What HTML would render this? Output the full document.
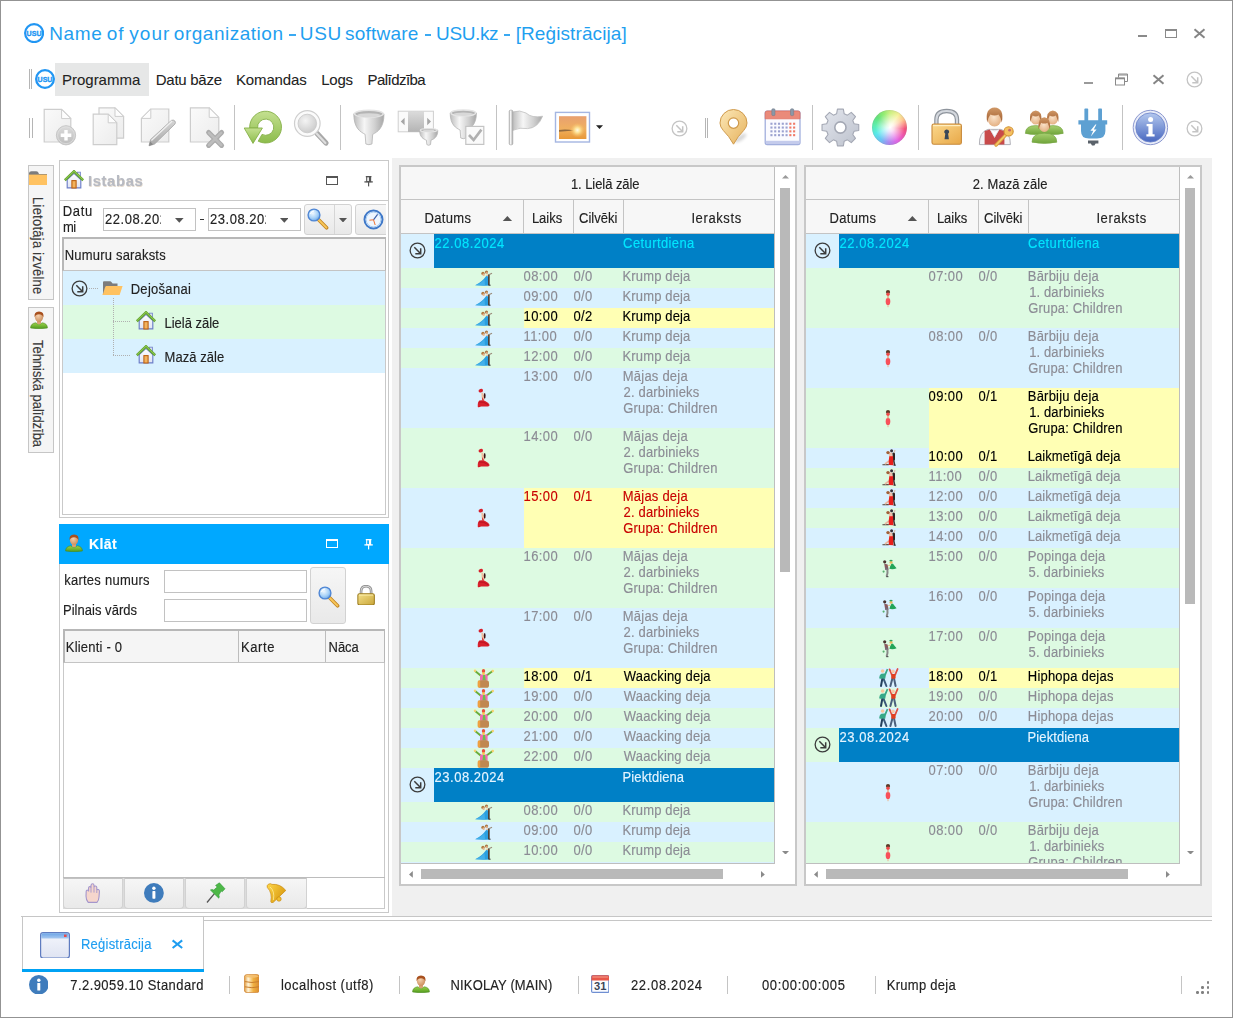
<!DOCTYPE html>
<html><head><meta charset="utf-8"><title>USU</title>
<style>
html,body{margin:0;padding:0;}
body{width:1233px;height:1018px;position:relative;overflow:hidden;background:#fff;font-family:"Liberation Sans",sans-serif;}
.r{position:absolute;display:block;}
.t{position:absolute;white-space:pre;display:block;-webkit-text-stroke:0.14px;}
.c{position:absolute;overflow:hidden;}
</style></head><body>
<div class="r" style="left:0px;top:0px;width:1233px;height:1018px;background:#fff;border:1px solid #939393;box-sizing:border-box;"></div>
<svg class="r" style="left:23.8px;top:22.5px;" width="20.2" height="20.2" viewBox="0 0 20.2 20.2"><circle cx="10.1" cy="10.1" r="9" fill="#fff" stroke="#2196f3" stroke-width="2.2"/><text x="10.1" y="12.827" font-family="Liberation Sans, sans-serif" font-weight="bold" font-size="7.474" fill="#2196f3" stroke="#2196f3" stroke-width="0.35" text-anchor="middle" textLength="14.948" lengthAdjust="spacingAndGlyphs">USU</text></svg>
<span class="t" style="left:49.20px;top:23.62px;font-size:19px;line-height:19px;color:#1f9ff0;letter-spacing:0.633px;-webkit-text-stroke:0;">Name</span>
<span class="t" style="left:106.70px;top:23.62px;font-size:19px;line-height:19px;color:#1f9ff0;letter-spacing:1.000px;-webkit-text-stroke:0;">of</span>
<span class="t" style="left:129.30px;top:23.62px;font-size:19px;line-height:19px;color:#1f9ff0;letter-spacing:1.033px;-webkit-text-stroke:0;">your</span>
<span class="t" style="left:173.80px;top:23.62px;font-size:19px;line-height:19px;color:#1f9ff0;letter-spacing:0.518px;-webkit-text-stroke:0;">organization</span>
<div class="r" style="left:289.4px;top:34.3px;width:6.2px;height:1.5px;background:#3aa9f2;"></div>
<span class="t" style="left:299.80px;top:23.62px;font-size:19px;line-height:19px;color:#1f9ff0;letter-spacing:0.650px;-webkit-text-stroke:0;">USU</span>
<span class="t" style="left:345.00px;top:23.62px;font-size:19px;line-height:19px;color:#1f9ff0;letter-spacing:0.214px;-webkit-text-stroke:0;">software</span>
<div class="r" style="left:425px;top:34.3px;width:6.1px;height:1.5px;background:#3aa9f2;"></div>
<span class="t" style="left:436.10px;top:23.62px;font-size:19px;line-height:19px;color:#1f9ff0;letter-spacing:-0.400px;-webkit-text-stroke:0;">USU.kz</span>
<div class="r" style="left:504.1px;top:34.3px;width:5.6px;height:1.5px;background:#3aa9f2;"></div>
<span class="t" style="left:515.70px;top:23.62px;font-size:19px;line-height:19px;color:#1f9ff0;letter-spacing:0.092px;-webkit-text-stroke:0;">[Reģistrācija]</span>
<div class="r" style="left:1138px;top:35px;width:9px;height:2px;background:#8a8a8a;"></div>
<div class="r" style="left:1165px;top:29px;width:12px;height:9px;border:1px solid #8a8a8a;border-top-width:2px;box-sizing:border-box;"></div>
<svg class="r" style="left:1193px;top:28px;" width="14" height="11" viewBox="0 0 14 11"><path d="M1.5 1.2 L11.5 9.8 M11.5 1.2 L1.5 9.8" stroke="#858585" stroke-width="2" fill="none"/></svg>
<div class="r" style="left:28.5px;top:69px;width:1px;height:20px;background:#b5b5b5;"></div>
<div class="r" style="left:31px;top:69px;width:1px;height:20px;background:#b5b5b5;"></div>
<svg class="r" style="left:34.9px;top:68.9px;" width="20" height="20" viewBox="0 0 20 20"><circle cx="10" cy="10" r="8.85" fill="#fff" stroke="#2196f3" stroke-width="2.3"/><text x="10" y="12.7" font-family="Liberation Sans, sans-serif" font-weight="bold" font-size="7.4" fill="#2196f3" stroke="#2196f3" stroke-width="0.35" text-anchor="middle" textLength="14.8" lengthAdjust="spacingAndGlyphs">USU</text></svg>
<div class="r" style="left:55px;top:63px;width:94px;height:33px;background:#e6e7e7;"></div>
<span class="t" style="left:62.00px;top:71.70px;font-size:15px;line-height:15px;color:#222;letter-spacing:-0.012px;-webkit-text-stroke:0.08px;">Programma</span>
<span class="t" style="left:155.80px;top:71.70px;font-size:15px;line-height:15px;color:#222;letter-spacing:-0.275px;-webkit-text-stroke:0.08px;">Datu bāze</span>
<span class="t" style="left:236.00px;top:71.70px;font-size:15px;line-height:15px;color:#222;letter-spacing:-0.143px;-webkit-text-stroke:0.08px;">Komandas</span>
<span class="t" style="left:321.20px;top:71.70px;font-size:15px;line-height:15px;color:#222;letter-spacing:-0.200px;-webkit-text-stroke:0.08px;">Logs</span>
<span class="t" style="left:367.60px;top:71.70px;font-size:15px;line-height:15px;color:#222;letter-spacing:-0.563px;-webkit-text-stroke:0.08px;">Palīdzība</span>
<div class="r" style="left:1084px;top:82px;width:9px;height:2px;background:#9a9a9a;"></div>
<svg class="r" style="left:1115px;top:73px;" width="14" height="13" viewBox="0 0 14 13"><path d="M3.5 1 H12.5 V8.5 H9.5 M3.5 1 V4.5 M3.5 2 H12.5" stroke="#8a8a8a" stroke-width="1" fill="none"/><rect x="0.5" y="5" width="9" height="7" fill="#fff" stroke="#8a8a8a"/><path d="M0.5 5.5H9.5" stroke="#8a8a8a" stroke-width="1.6"/></svg>
<svg class="r" style="left:1152px;top:74px;" width="14" height="11" viewBox="0 0 14 11"><path d="M1.5 1.2 L11.5 9.8 M11.5 1.2 L1.5 9.8" stroke="#858585" stroke-width="2" fill="none"/></svg>
<svg class="r" style="left:1185.3px;top:70px;" width="19" height="19" viewBox="0 0 19 19"><circle cx="9.5" cy="9.5" r="7.35" fill="none" stroke="#c4c4c4" stroke-width="1.3"/><path d="M6.3 6.3 L12.5 12.5 M7.3 12.7 L12.7 12.7 L12.7 7.3" fill="none" stroke="#c4c4c4" stroke-width="1.5"/></svg>
<div class="r" style="left:29px;top:117.5px;width:1px;height:20px;background:#b5b5b5;"></div>
<div class="r" style="left:31.5px;top:117.5px;width:1px;height:20px;background:#b5b5b5;"></div>
<div class="r" style="left:234px;top:105px;width:1px;height:45px;background:#c3c3c3;"></div>
<div class="r" style="left:340px;top:105px;width:1px;height:45px;background:#c3c3c3;"></div>
<div class="r" style="left:495.5px;top:105px;width:1px;height:45px;background:#c3c3c3;"></div>
<div class="r" style="left:811.8px;top:105px;width:1px;height:45px;background:#c3c3c3;"></div>
<div class="r" style="left:917.8px;top:105px;width:1px;height:45px;background:#c3c3c3;"></div>
<div class="r" style="left:1122px;top:105px;width:1px;height:45px;background:#c3c3c3;"></div>
<div class="r" style="left:704.5px;top:117.5px;width:1px;height:20px;background:#b5b5b5;"></div>
<div class="r" style="left:707px;top:117.5px;width:1px;height:20px;background:#b5b5b5;"></div>
<svg class="r" style="left:670.1px;top:118.5px;" width="19" height="19" viewBox="0 0 19 19"><circle cx="9.5" cy="9.5" r="7.35" fill="none" stroke="#c4c4c4" stroke-width="1.3"/><path d="M6.3 6.3 L12.5 12.5 M7.3 12.7 L12.7 12.7 L12.7 7.3" fill="none" stroke="#c4c4c4" stroke-width="1.5"/></svg>
<svg class="r" style="left:1185.4px;top:118.7px;" width="19" height="19" viewBox="0 0 19 19"><circle cx="9.5" cy="9.5" r="7.35" fill="none" stroke="#c4c4c4" stroke-width="1.3"/><path d="M6.3 6.3 L12.5 12.5 M7.3 12.7 L12.7 12.7 L12.7 7.3" fill="none" stroke="#c4c4c4" stroke-width="1.5"/></svg>
<svg width="0" height="0" style="position:absolute"><defs>
<linearGradient id="docg" x1="0" y1="0" x2="1" y2="1"><stop offset="0" stop-color="#fafafa"/><stop offset="1" stop-color="#ececec"/></linearGradient>
<linearGradient id="grayl" x1="0" y1="0" x2="0" y2="1"><stop offset="0" stop-color="#dcdcdc"/><stop offset="1" stop-color="#bcbcbc"/></linearGradient>
<linearGradient id="grayv" x1="0" y1="0" x2="0" y2="1"><stop offset="0" stop-color="#d6d6d6"/><stop offset="1" stop-color="#a8a8a8"/></linearGradient>
<linearGradient id="funh" x1="0" y1="0" x2="1" y2="0"><stop offset="0" stop-color="#bdbdbd"/><stop offset="0.35" stop-color="#f6f6f6"/><stop offset="0.7" stop-color="#d0d0d0"/><stop offset="1" stop-color="#a6a6a6"/></linearGradient>
<linearGradient id="grn" x1="0" y1="0" x2="0" y2="1"><stop offset="0" stop-color="#c4e090"/><stop offset="1" stop-color="#8cbc4c"/></linearGradient>
<radialGradient id="glass" cx="0.4" cy="0.35" r="0.8"><stop offset="0" stop-color="#f4f4f4"/><stop offset="1" stop-color="#c4c4c4"/></radialGradient>
<linearGradient id="gold" x1="0" y1="0" x2="1" y2="1"><stop offset="0" stop-color="#fce8b8"/><stop offset="1" stop-color="#e6b25c"/></linearGradient>
<linearGradient id="lockb" x1="0" y1="0" x2="1" y2="1"><stop offset="0" stop-color="#fbd88c"/><stop offset="1" stop-color="#e8a848"/></linearGradient>
<linearGradient id="gear" x1="0" y1="0" x2="1" y2="1"><stop offset="0" stop-color="#e4e7ee"/><stop offset="1" stop-color="#bcc1cc"/></linearGradient>
<radialGradient id="skin" cx="0.45" cy="0.4" r="0.7"><stop offset="0" stop-color="#fbe4cc"/><stop offset="1" stop-color="#e0a878"/></radialGradient>
<linearGradient id="hair" x1="0" y1="0" x2="0" y2="1"><stop offset="0" stop-color="#d09866"/><stop offset="1" stop-color="#a05c2e"/></linearGradient>
<linearGradient id="gbody" x1="0" y1="0" x2="0" y2="1"><stop offset="0" stop-color="#a8d070"/><stop offset="1" stop-color="#6fa43a"/></linearGradient>
<linearGradient id="infog" x1="0" y1="0" x2="0" y2="1"><stop offset="0" stop-color="#b4c8ee"/><stop offset="1" stop-color="#4868c0"/></linearGradient>
<linearGradient id="sun" x1="0" y1="0" x2="0" y2="1"><stop offset="0" stop-color="#e8a070"/><stop offset="0.55" stop-color="#f0b060"/><stop offset="1" stop-color="#e89838"/></linearGradient>
<radialGradient id="sung" cx="0.5" cy="0.5" r="0.5"><stop offset="0" stop-color="#fffbe8"/><stop offset="0.35" stop-color="#ffe9a0" stop-opacity="0.9"/><stop offset="1" stop-color="#f8c060" stop-opacity="0"/></radialGradient>
<filter id="blur1" x="-50%" y="-50%" width="200%" height="200%"><feGaussianBlur stdDeviation="1.6"/></filter>
</defs></svg>
<svg class="r" style="left:0;top:100px" width="1233" height="55" viewBox="0 100 1233 55"><path d="M44.2 109.4 H61.6 L70.8 118.6 V142 H44.2 Z" fill="url(#docg)" stroke="#cdcdcd" stroke-width="1.2"/><path d="M61.6 109.4 V118.6 H70.8 Z" fill="#fdfdfd" stroke="#cdcdcd" stroke-width="1"/>
<circle cx="66" cy="135.3" r="9.6" fill="url(#grayl)" stroke="#c6c6c6" stroke-width="1"/><circle cx="66" cy="135.3" r="8.4" fill="none" stroke="#e0e0e0" stroke-width="0.8"/><path d="M66 130 V140.6 M60.7 135.3 H71.3" stroke="#fff" stroke-width="3.4"/>
<path d="M99 107.8 H115 L123.6 116.4 V138.2 H99 Z" fill="url(#docg)" stroke="#cdcdcd" stroke-width="1.2"/><path d="M115 107.8 V116.4 H123.6 Z" fill="#fdfdfd" stroke="#cdcdcd" stroke-width="1"/>
<path d="M93.2 114.2 H108.2 L116.8 122.8 V144.6 H93.2 Z" fill="url(#docg)" stroke="#cdcdcd" stroke-width="1.2"/><path d="M108.2 114.2 V122.8 H116.8 Z" fill="#fdfdfd" stroke="#cdcdcd" stroke-width="1"/>
<path d="M150.8 109 H168.8 V142 H141.4 V118.4 Z" fill="url(#docg)" stroke="#cdcdcd" stroke-width="1.2"/><path d="M150.8 109 V118.4 H141.4 Z" fill="#fdfdfd" stroke="#cdcdcd" stroke-width="1"/>
<path d="M149 145.8 L150.6 139.6 L171.4 120.4 Q173.4 119.4 175 121.2 Q176 122.8 174.8 124.2 L154.6 144 Z" fill="url(#grayv)" stroke="#a2a2a2" stroke-width="0.8"/><path d="M151.4 140.4 L172.2 121" stroke="#eee" stroke-width="1.4"/><path d="M149 145.8 L150.2 141.4 L153.2 144.4Z" fill="#8a8a8a"/>
<path d="M190.4 107.8 H209.2 L218.8 117.4 V142 H190.4 Z" fill="url(#docg)" stroke="#cdcdcd" stroke-width="1.2"/><path d="M209.2 107.8 V117.4 H218.8 Z" fill="#fdfdfd" stroke="#cdcdcd" stroke-width="1"/>
<path d="M208.6 132.4 L221.6 145.4 M221.6 132.4 L208.6 145.4" stroke="#ababab" stroke-width="5" stroke-linecap="round"/><path d="M209 132.8 L221.2 145 M221.2 132.8 L209 145" stroke="#bdbdbd" stroke-width="2.6" stroke-linecap="round"/>
<path d="M257 138.4 A 11.9 11.9 0 1 0 253.6 127 L253.6 128.4 M257 138.4" fill="none"/>
<path d="M249.7 128 A 15.9 15.9 0 1 1 258.2 141.2 L262 134.4 A 8.1 8.1 0 1 0 257.6 128 Z" fill="url(#grn)" stroke="#86b048" stroke-width="0.9"/>
<path d="M244.2 128 H262.4 L253 143.4 Z" fill="url(#grn)" stroke="#86b048" stroke-width="0.9"/>
<path d="M317 133.4 L326 143" stroke="#a8a8a8" stroke-width="5.2" stroke-linecap="round"/><path d="M316.6 133.6 L325.4 143" stroke="#dedede" stroke-width="2.2" stroke-linecap="round"/>
<circle cx="307.3" cy="123.5" r="12.8" fill="#fbfbfb" stroke="#cfcfcf" stroke-width="1.2"/><circle cx="307.3" cy="123.5" r="9.3" fill="url(#glass)" stroke="#c6c6c6" stroke-width="0.8"/>
<path d="M353.8 113.802 C353.8 128.557 360.54 131.877 365.1 134.334 L365.86 144 Q368.9 145.4 371.94 144 L372.7 134.334 C377.26 131.877 384 128.557 384 113.802 Z" fill="url(#funh)" stroke="#b4b4b4" stroke-width="0.8"/><ellipse cx="368.9" cy="113.802" rx="14.4" ry="3.602" fill="#b4b4b4" stroke="#e4e4e4" stroke-width="1.4"/><ellipse cx="368.9" cy="115.203" rx="11.7" ry="2.001" fill="#d8d8d8"/>
<rect x="398.2" y="111.2" width="35.2" height="20.6" fill="#fafafa" stroke="#cfcfcf" stroke-width="1"/><rect x="408" y="111.2" width="16" height="20.6" fill="url(#grayv)" opacity="0.85"/><path d="M404.6 117.8 V125.2 L400.8 121.5Z M427.2 117.8 V125.2 L431 121.5Z" fill="#a6a6a6"/>
<path d="M419.6 130.155 C419.6 137.363 423.64 138.985 426.4 140.185 L426.86 144.6 Q428.7 146 430.54 144.6 L431 140.185 C433.76 138.985 437.8 137.363 437.8 130.155 Z" fill="url(#funh)" stroke="#b4b4b4" stroke-width="0.8"/><ellipse cx="428.7" cy="130.155" rx="8.4" ry="1.555" fill="#b4b4b4" stroke="#e4e4e4" stroke-width="1.4"/><ellipse cx="428.7" cy="130.839" rx="5.7" ry="0.9775" fill="#d8d8d8"/>
<path d="M450.2 112.935 C450.2 125.231 456.26 127.998 460.1 130.045 L460.74 138 Q463.3 139.4 465.86 138 L466.5 130.045 C470.34 127.998 476.4 125.231 476.4 112.935 Z" fill="url(#funh)" stroke="#b4b4b4" stroke-width="0.8"/><ellipse cx="463.3" cy="112.935" rx="12.4" ry="2.935" fill="#b4b4b4" stroke="#e4e4e4" stroke-width="1.4"/><ellipse cx="463.3" cy="114.102" rx="9.7" ry="1.6675" fill="#d8d8d8"/>
<rect x="465.8" y="126.4" width="18" height="18" fill="#fafafa" stroke="#c4c4c4" stroke-width="1.2"/><path d="M469 135 L473.6 140 L481.4 129.6" fill="none" stroke="#b0b0b0" stroke-width="2.6"/>
<path d="M512.6 112 Q520 109.6 526 113 Q532 118.4 542.6 116.2 Q538 128 527.6 128.6 Q520 127 512.6 130.4Z" fill="url(#funh)" stroke="#c0c0c0" stroke-width="0.8"/>
<rect x="509.2" y="110.2" width="3.6" height="34.6" rx="1.2" fill="url(#funh)" stroke="#a8a8a8" stroke-width="0.7"/>
<rect x="555.5" y="112.4" width="34" height="29.6" fill="#fff" stroke="#a4b6e2" stroke-width="1.4"/><rect x="559" y="116.2" width="27.4" height="22.8" fill="url(#sun)"/><path d="M559 130 Q566 128.6 574 130.6 L559 131.8Z" fill="#7a5a3a" opacity="0.8"/><circle cx="577.4" cy="130.2" r="7.4" fill="url(#sung)"/>
<path d="M596 125.2 H603 L599.5 128.9Z" fill="#222"/>
<ellipse cx="740.5" cy="138" rx="7" ry="2.6" fill="#000" opacity="0.16" transform="rotate(-35 740.5 138)" filter="url(#blur1)"/>
<path d="M733.5 144.2 Q729 136 723.4 130.6 Q720 127 720 123 A13.5 13.5 0 0 1 747 123 Q747 127 743.6 130.6 Q738 136 733.5 144.2Z" fill="url(#gold)" stroke="#cf9a4c" stroke-width="1"/><circle cx="733.5" cy="123.1" r="5.2" fill="#fff" stroke="#cf9a4c" stroke-width="1.2"/>
<rect x="765.2" y="111" width="34.8" height="33.6" rx="2" fill="#fbfbff" stroke="#9aa8da" stroke-width="1.2"/><path d="M765.2 118.8 V113 Q765.2 111 767.2 111 H798 Q800 111 800 113 V118.8Z" fill="#ea8a7a" stroke="#e07060" stroke-width="0.8"/><rect x="765.8" y="140.8" width="33.6" height="3.4" fill="#c4cbec"/>
<rect x="771.8" y="108.8" width="3.2" height="6.8" rx="1" fill="#8a98a8" stroke="#6c7888" stroke-width="0.5"/><rect x="790.5" y="108.8" width="3.2" height="6.8" rx="1" fill="#8a98a8" stroke="#6c7888" stroke-width="0.5"/>
<rect x="770.4" y="122.7" width="2.1" height="2.1" fill="#9ca2d0"/>
<rect x="774.18" y="122.7" width="2.1" height="2.1" fill="#9ca2d0"/>
<rect x="777.96" y="122.7" width="2.1" height="2.1" fill="#9ca2d0"/>
<rect x="781.74" y="122.7" width="2.1" height="2.1" fill="#9ca2d0"/>
<rect x="785.52" y="122.7" width="2.1" height="2.1" fill="#9ca2d0"/>
<rect x="789.3" y="122.7" width="2.1" height="2.1" fill="#f07a68"/>
<rect x="793.08" y="122.7" width="2.1" height="2.1" fill="#f07a68"/>
<rect x="770.4" y="126.5" width="2.1" height="2.1" fill="#9ca2d0"/>
<rect x="774.18" y="126.5" width="2.1" height="2.1" fill="#9ca2d0"/>
<rect x="777.96" y="126.5" width="2.1" height="2.1" fill="#9ca2d0"/>
<rect x="781.74" y="126.5" width="2.1" height="2.1" fill="#9ca2d0"/>
<rect x="785.52" y="126.5" width="2.1" height="2.1" fill="#9ca2d0"/>
<rect x="789.3" y="126.5" width="2.1" height="2.1" fill="#f07a68"/>
<rect x="793.08" y="126.5" width="2.1" height="2.1" fill="#f07a68"/>
<rect x="770.4" y="130.3" width="2.1" height="2.1" fill="#9ca2d0"/>
<rect x="774.18" y="130.3" width="2.1" height="2.1" fill="#9ca2d0"/>
<rect x="777.96" y="130.3" width="2.1" height="2.1" fill="#9ca2d0"/>
<rect x="781.74" y="130.3" width="2.1" height="2.1" fill="#9ca2d0"/>
<rect x="785.52" y="130.3" width="2.1" height="2.1" fill="#9ca2d0"/>
<rect x="789.3" y="130.3" width="2.1" height="2.1" fill="#f07a68"/>
<rect x="793.08" y="130.3" width="2.1" height="2.1" fill="#f07a68"/>
<rect x="770.4" y="134.1" width="2.1" height="2.1" fill="#9ca2d0"/>
<rect x="774.18" y="134.1" width="2.1" height="2.1" fill="#9ca2d0"/>
<rect x="777.96" y="134.1" width="2.1" height="2.1" fill="#9ca2d0"/>
<rect x="781.74" y="134.1" width="2.1" height="2.1" fill="#9ca2d0"/>
<rect x="785.52" y="134.1" width="2.1" height="2.1" fill="#9ca2d0"/>
<rect x="789.3" y="134.1" width="2.1" height="2.1" fill="#f07a68"/>
<rect x="793.08" y="134.1" width="2.1" height="2.1" fill="#f07a68"/>
<path d="M836.61 113.81 L837.44 109.14 L843.36 109.14 L844.19 113.81 L847.40 115.14 L851.29 112.42 L855.48 116.61 L852.76 120.50 L854.09 123.71 L858.76 124.54 L858.76 130.46 L854.09 131.29 L852.76 134.50 L855.48 138.39 L851.29 142.58 L847.40 139.86 L844.19 141.19 L843.36 145.86 L837.44 145.86 L836.61 141.19 L833.40 139.86 L829.51 142.58 L825.32 138.39 L828.04 134.50 L826.71 131.29 L822.04 130.46 L822.04 124.54 L826.71 123.71 L828.04 120.50 L825.32 116.61 L829.51 112.42 L833.40 115.14 Z" fill="url(#gear)" stroke="#a4a8b4" stroke-width="1.1" stroke-linejoin="round"/>
<circle cx="840.4" cy="127.5" r="5.6" fill="#fff" stroke="#a4a8b4" stroke-width="1.6"/>
<path d="M936.4 125 V119.8 Q936.4 111 946.7 111 Q957 111 957 119.8 V125" fill="none" stroke="#8e949c" stroke-width="4.4"/><path d="M936.4 125 V119.8 Q936.4 111 946.7 111 Q957 111 957 119.8 V125" fill="none" stroke="#d4d8de" stroke-width="2"/>
<rect x="932" y="124" width="29.4" height="20.2" rx="1.8" fill="url(#lockb)" stroke="#c88a3c" stroke-width="1.1"/><path d="M933 125.6 H960.4" stroke="#ffeec0" stroke-width="1.2"/><path d="M946.7 129.4 a2.4 2.4 0 0 1 1.4 4.4 l0.8 5.4 h-4.4 l0.8 -5.4 a2.4 2.4 0 0 1 1.4 -4.4z" fill="#3a4858"/>
<path d="M979.4 144.6 Q979 132 988 129.4 L1001 129.4 Q1010.6 132 1010.4 144.6Z" fill="#f4f4f6" stroke="#a8a8b0" stroke-width="0.9"/><path d="M984.6 144.6 V131 L990 129.4 L994.6 138 L999.2 129.4 L1004.4 131 V144.6Z" fill="#c84a4a"/><path d="M990 129.4 L994.6 137 L999.2 129.4 L994.6 131Z" fill="#fff" stroke="#c8c8d0" stroke-width="0.5"/>
<ellipse cx="994.5" cy="118.6" rx="6.8" ry="8" fill="url(#skin)"/><path d="M987.2 122.6 Q984.6 108 994.6 107.4 Q1004.6 108 1001.8 122.6 Q1000.6 117 998.6 114.6 Q994.6 116.4 990.4 114.6 Q988.4 117 987.2 122.6Z" fill="url(#hair)"/>
<path d="M996 145 L1006 134.6" stroke="#d89a3a" stroke-width="3.4" stroke-linecap="round"/><path d="M996 145 L1006 134.6" stroke="#f6c868" stroke-width="1.6" stroke-linecap="round"/><circle cx="1008.6" cy="131.4" r="4.6" fill="#f4c060" stroke="#d09030" stroke-width="1.1"/><circle cx="1009.6" cy="130.2" r="1.4" fill="#c86a6a"/>
<path d="M1025.4 133.4 Q1025.4 125.6 1035.7 125.6 Q1046 125.6 1046 133.4 Q1035.7 135.8 1025.4 133.4 Z" fill="url(#gbody)" stroke="#7aa848" stroke-width="0.7"/><ellipse cx="1035.7" cy="118.2" rx="5.248" ry="6.4" fill="url(#skin)"/><path d="M1030.2 122.04 Q1028.65 110.84 1035.7 110.392 Q1042.75 110.84 1041.2 122.04 Q1039.99 117.88 1038.78 115.512 Q1035.7 117.432 1032.62 115.512 Q1031.41 117.88 1030.2 122.04Z" fill="url(#hair)"/>
<path d="M1042.6 133.4 Q1042.6 125.6 1052.9 125.6 Q1063.2 125.6 1063.2 133.4 Q1052.9 135.8 1042.6 133.4 Z" fill="url(#gbody)" stroke="#7aa848" stroke-width="0.7"/><ellipse cx="1052.8" cy="118.2" rx="5.248" ry="6.4" fill="url(#skin)"/><path d="M1047.3 122.04 Q1045.75 110.84 1052.8 110.392 Q1059.85 110.84 1058.3 122.04 Q1057.09 117.88 1055.88 115.512 Q1052.8 117.432 1049.72 115.512 Q1048.51 117.88 1047.3 122.04Z" fill="url(#hair)"/>
<path d="M1032 142.2 Q1032 133.2 1044.4 133.2 Q1056.8 133.2 1056.8 142.2 Q1044.4 144.6 1032 142.2 Z" fill="url(#gbody)" stroke="#7aa848" stroke-width="0.7"/><ellipse cx="1044.3" cy="125.4" rx="5.412" ry="6.6" fill="url(#skin)"/><path d="M1038.62 129.36 Q1037.03 117.81 1044.3 117.348 Q1051.57 117.81 1049.98 129.36 Q1048.73 125.07 1047.48 122.628 Q1044.3 124.608 1041.12 122.628 Q1039.87 125.07 1038.62 129.36Z" fill="url(#hair)"/>
<rect x="1084.4" y="108.6" width="3.8" height="13" rx="0.8" fill="#5da0d2"/><rect x="1098.2" y="108.6" width="3.8" height="13" rx="0.8" fill="#5da0d2"/>
<path d="M1078.4 120.2 H1107.2 V124.6 H1105.4 V131 Q1105.4 138.6 1097 138.6 H1089 Q1081 138.6 1081 131 V124.6 H1078.4Z" fill="#5da0d2"/><path d="M1095.4 124.6 L1090.4 130.8 H1093.2 L1090.8 136.4 L1096.6 129.6 H1093.8 L1096.4 124.6Z" fill="#fff"/>
<path d="M1088 140.4 H1098.4 V143.4 H1095.6 L1094.4 145.6 H1092 L1090.8 143.4 H1088Z" fill="#5a626a"/>
<circle cx="1150.4" cy="127.5" r="17.2" fill="#e8ecf8" stroke="#8c98d0" stroke-width="1"/><circle cx="1150.4" cy="127.5" r="14.6" fill="url(#infog)" stroke="#6a80c8" stroke-width="0.8"/>
<circle cx="1150.6" cy="119.6" r="2.5" fill="#fff"/><path d="M1146.6 124 H1152.6 V134.2 H1154.6 V136.4 H1146.4 V134.2 H1148.4 V126.2 H1146.6Z" fill="#fff"/></svg>
<div class="r" style="left:871.6px;top:109.7px;width:35px;height:35px;border-radius:50%;background:radial-gradient(circle at 52% 50%,rgba(255,255,255,1) 0%,rgba(255,255,255,0.8) 16%,rgba(255,255,255,0) 58%),conic-gradient(from 0deg,#c8f080 0deg,#f6f29a 35deg,#ffc890 60deg,#f4507c 95deg,#ee58b8 125deg,#e266e6 150deg,#a88af0 185deg,#6cc4f6 215deg,#58eaea 245deg,#5cf0b4 275deg,#66e47c 310deg,#98ee72 340deg,#c8f080 360deg);box-shadow:inset 0 0 2px rgba(120,120,120,0.5);"></div>
<div class="r" style="left:391.5px;top:157.5px;width:820.5px;height:758.5px;background:#f0f0f0;"></div>
<div class="r" style="left:21px;top:915.5px;width:1191px;height:1px;background:#c6c6c6;"></div>
<div class="r" style="left:204px;top:919.5px;width:1008px;height:1px;background:#c6c6c6;"></div>
<div class="r" style="left:28px;top:164.5px;width:26px;height:135px;background:#f5f5f5;border:1px solid #c6c6c6;box-sizing:border-box;"></div>
<svg class="r" style="left:28.5px;top:171px;" width="18" height="14" viewBox="0 0 18 14"><path d="M0 2.2 Q0 0.2 2.5 0.2 H7 Q8.6 0.2 9.3 1.5 L10 3 H18 V6 H0 Z" fill="#7c7c7c"/>
<rect x="0" y="3.6" width="18" height="10.4" fill="#ffc261"/></svg>
<span class="t" style="left:44.70px;top:196.70px;font-size:13px;line-height:13px;color:#3a3a3a;letter-spacing:0.256px;transform-origin:0 0;transform:rotate(90deg) scaleY(1.1);">Lietotāja izvēlne</span>
<div class="r" style="left:28px;top:306.5px;width:26px;height:146px;background:#f5f5f5;border:1px solid #c6c6c6;box-sizing:border-box;"></div>
<svg class="r" style="left:30px;top:310.6px;" width="18" height="18" viewBox="0 0 18 18"><defs><radialGradient id="uh520" cx="0.4" cy="0.35" r="0.7"><stop offset="0" stop-color="#f6d2b0"/><stop offset="1" stop-color="#c98a58"/></radialGradient>
<linearGradient id="ub520" x1="0" y1="0" x2="0" y2="1"><stop offset="0" stop-color="#9bd24a"/><stop offset="1" stop-color="#4f9a1e"/></linearGradient></defs>
<path d="M0.6 17 Q0.6 12.6 5.5 11.8 L9 13.4 L12.5 11.8 Q17.4 12.6 17.4 17 Q9 18.6 0.6 17Z" fill="url(#ub520)" stroke="#4a8a1c" stroke-width="0.6"/>
<path d="M7 9 H11 V12.4 L9 13.6 L7 12.4Z" fill="#d9a273"/>
<ellipse cx="9" cy="6" rx="4.1" ry="5" fill="url(#uh520)"/>
<path d="M4.6 6.2 Q3.8 0.6 9 0.4 Q14.4 0.6 13.4 6.4 Q12.6 3.4 9 3.2 Q5.6 3.4 4.6 6.2Z" fill="#a8501e"/></svg>
<span class="t" style="left:44.70px;top:339.80px;font-size:13px;line-height:13px;color:#3a3a3a;letter-spacing:-0.035px;transform-origin:0 0;transform:rotate(90deg) scaleY(1.1);">Tehniskā palīdzība</span>
<div class="r" style="left:59px;top:160px;width:330px;height:358px;background:#fff;border:1px solid #c9c9c9;box-sizing:border-box;"></div>
<div class="r" style="left:60px;top:200px;width:328px;height:1px;background:#c9c9c9;"></div>
<svg class="r" style="left:63.8px;top:170px;" width="20" height="19" viewBox="0 0 20 19"><defs><linearGradient id="hg808" x1="0" y1="0" x2="0" y2="1"><stop offset="0" stop-color="#fff"/><stop offset="1" stop-color="#dfe4f3"/></linearGradient></defs>
<rect x="13.4" y="2.2" width="3" height="6" fill="#dfe3f4" stroke="#7687cc" stroke-width="0.9"/>
<path d="M3.2 9.5 L10 3.4 L16.8 9.5 V17.8 H3.2 Z" fill="url(#hg808)" stroke="#6c7ec8" stroke-width="1.15"/>
<path d="M0.8 10.2 L10 1.4 L19.2 10.2" fill="none" stroke="#5f9e2c" stroke-width="2.6" stroke-linejoin="miter"/>
<path d="M1.2 9.6 L10 1.2 L18.8 9.6" fill="none" stroke="#8cc850" stroke-width="1.1"/>
<rect x="7.9" y="10.6" width="4.2" height="7.4" fill="#f2b25c" stroke="#bc6214" stroke-width="1.1"/></svg>
<span class="t" style="left:88.40px;top:175.20px;font-size:13px;line-height:13px;color:#b7bac2;letter-spacing:0.557px;font-weight:bold;transform-origin:0.80px 11.00px;transform:scale(1.14,1.06);text-shadow:0.5px 0.6px 0 #e6dccf;">Istabas</span>
<div class="r" style="left:326px;top:176px;width:12px;height:9px;border:1px solid #555;border-top-width:2.5px;box-sizing:border-box;"></div>
<svg class="r" style="left:363.6px;top:176.2px;" width="9.2" height="10.6" viewBox="0 0 9.2 10.6"><path d="M1.8 0.6 H7.4" stroke="#555" stroke-width="1.2"/><rect x="2.7" y="0.6" width="3.9" height="5" fill="none" stroke="#555" stroke-width="1.1"/><rect x="4.9" y="0.6" width="1.8" height="5" fill="#555"/><path d="M0.4 5.9 H8.8" stroke="#555" stroke-width="1.3"/><path d="M4.6 6 V10.4" stroke="#555" stroke-width="1.2"/></svg>
<span class="t" style="left:62.70px;top:205.00px;font-size:13px;line-height:13px;color:#222;letter-spacing:0.700px;transform-origin:0 11.00px;transform:scaleY(1.1);">Datu</span>
<span class="t" style="left:63.10px;top:221.40px;font-size:13px;line-height:13px;color:#222;letter-spacing:-0.600px;transform-origin:0 11.00px;transform:scaleY(1.1);">mi</span>
<div class="r" style="left:102.5px;top:207.5px;width:93.5px;height:23.5px;background:#fff;border:1px solid #c2c2c2;box-sizing:border-box;"></div>
<div class="c" style="left:103.5px;top:209px;width:57.8px;height:20px;"><span class="t" style="left:1.60px;top:4.00px;font-size:13px;line-height:13px;color:#222;letter-spacing:0.522px;transform-origin:0 11.00px;transform:scaleY(1.1);">22.08.2024</span></div>
<svg class="r" style="left:175px;top:217.8px;" width="8.6" height="4.8" viewBox="0 0 8.6 4.8"><path d="M0 0 H8.6 L4.3 4.8 Z" fill="#555"/></svg>
<div class="r" style="left:207.5px;top:207.5px;width:93.5px;height:23.5px;background:#fff;border:1px solid #c2c2c2;box-sizing:border-box;"></div>
<div class="c" style="left:208.5px;top:209px;width:57.8px;height:20px;"><span class="t" style="left:1.60px;top:4.00px;font-size:13px;line-height:13px;color:#222;letter-spacing:0.522px;transform-origin:0 11.00px;transform:scaleY(1.1);">23.08.2024</span></div>
<svg class="r" style="left:279.8px;top:217.8px;" width="8.6" height="4.8" viewBox="0 0 8.6 4.8"><path d="M0 0 H8.6 L4.3 4.8 Z" fill="#555"/></svg>
<div class="r" style="left:200.3px;top:218.9px;width:4.2px;height:1.2px;background:#333;"></div>
<div class="r" style="left:304px;top:204px;width:48px;height:31px;background:linear-gradient(#f6f6f6,#e9e9e9);border:1px solid #d2d2d2;border-radius:3px;box-sizing:border-box;"></div>
<div class="r" style="left:333.5px;top:205px;width:1px;height:29px;background:#d6d6d6;"></div>
<svg class="r" style="left:306.9px;top:207.8px;" width="22" height="22" viewBox="0 0 22 22"><defs><radialGradient id="mg930" cx="0.4" cy="0.35" r="0.75"><stop offset="0" stop-color="#f0f8ff"/><stop offset="0.55" stop-color="#a8d2f8"/><stop offset="1" stop-color="#5a9ae4"/></radialGradient></defs>
<path d="M11.4 11.6 L19.6 19.8" stroke="#c08424" stroke-width="3.6" stroke-linecap="round"/>
<path d="M11.6 11.8 L19.4 19.6" stroke="#f8c658" stroke-width="2" stroke-linecap="round"/>
<circle cx="7" cy="7" r="5.9" fill="url(#mg930)" stroke="#4f86d4" stroke-width="1.4"/>
<path d="M3.4 6 Q4.2 3.4 7 3" stroke="#fff" stroke-width="1.1" fill="none" opacity="0.9"/></svg>
<svg class="r" style="left:338.8px;top:217.6px;" width="8" height="4.5" viewBox="0 0 8 4.5"><path d="M0 0 H8 L4 4.5 Z" fill="#555"/></svg>
<div class="c" style="left:355px;top:204px;width:31px;height:31px;"><div class="r" style="left:0px;top:0px;width:40px;height:31px;background:linear-gradient(#f6f6f6,#e9e9e9);border:1px solid #d2d2d2;border-radius:3px;box-sizing:border-box;"></div><svg class="r" style="left:7.5px;top:5px;" width="21" height="21" viewBox="0 0 21 21"><circle cx="10.5" cy="10.5" r="9" fill="#eef6ff" stroke="#3f78c8" stroke-width="2"/><circle cx="10.5" cy="10.5" r="7.4" fill="none" stroke="#9cc4ee" stroke-width="0.8"/><path d="M10.5 10.8 L14.6 5.4" stroke="#3b5fa8" stroke-width="1.2"/><path d="M10.5 10.8 L12.2 16" stroke="#f07030" stroke-width="1"/><path d="M10.5 10.8 L6.4 11.2" stroke="#f07030" stroke-width="1"/></svg></div>
<div class="r" style="left:62px;top:236.5px;width:324px;height:278.5px;background:#fff;border:1px solid #c9c9c9;box-sizing:border-box;"></div>
<div class="r" style="left:62px;top:236.5px;width:324px;height:34px;background:#f5f5f5;border-top:2px solid #b7b7b7;border-left:2px solid #b7b7b7;border-right:1.5px solid #b7b7b7;border-bottom:1px solid #c4c4c4;box-sizing:border-box;"></div>
<span class="t" style="left:64.80px;top:249.00px;font-size:13px;line-height:13px;color:#222;letter-spacing:0.186px;transform-origin:0 11.00px;transform:scaleY(1.1);">Numuru saraksts</span>
<div class="r" style="left:63px;top:271px;width:322px;height:34px;background:#d9f1ff;"></div>
<div class="r" style="left:63px;top:305px;width:322px;height:34.2px;background:#ddfae2;"></div>
<div class="r" style="left:63px;top:339.2px;width:322px;height:33.6px;background:#d9f1ff;"></div>
<svg class="r" style="left:69.8px;top:278.5px;" width="19" height="19" viewBox="0 0 19 19"><circle cx="9.5" cy="9.5" r="7.35" fill="none" stroke="#3c3c3c" stroke-width="1.3"/><path d="M6.3 6.3 L12.5 12.5 M7.3 12.7 L12.7 12.7 L12.7 7.3" fill="none" stroke="#3c3c3c" stroke-width="1.5"/></svg>
<div class="r" style="left:89px;top:288px;width:9px;height:1px;border-top:1px dotted #b0b0b0;"></div>
<svg class="r" style="left:102px;top:280.8px;" width="21" height="14.5" viewBox="0 0 21 14.5"><path d="M1 1.2 Q1 0.3 2 0.3 H8 Q9 0.3 9.6 1.2 L10.6 2.6 H15.5 V6 H1 Z" fill="#7c7c7c"/>
<path d="M0.4 14 L3.2 5 H20.6 L17.6 14 Z" fill="#ffc261"/>
<path d="M1 1.4 V13 L3.4 5.2" fill="#7c7c7c"/></svg>
<span class="t" style="left:130.70px;top:283.00px;font-size:13px;line-height:13px;color:#222;letter-spacing:0.288px;transform-origin:0 11.00px;transform:scaleY(1.1);">Dejošanai</span>
<div class="r" style="left:113px;top:298px;width:1px;height:57px;border-left:1px dotted #b0b0b0;"></div>
<div class="r" style="left:113px;top:321px;width:17px;height:1px;border-top:1px dotted #b0b0b0;"></div>
<div class="r" style="left:113px;top:354.5px;width:17px;height:1px;border-top:1px dotted #b0b0b0;"></div>
<svg class="r" style="left:136.2px;top:311px;" width="20" height="19" viewBox="0 0 20 19"><defs><linearGradient id="hg1673" x1="0" y1="0" x2="0" y2="1"><stop offset="0" stop-color="#fff"/><stop offset="1" stop-color="#dfe4f3"/></linearGradient></defs>
<rect x="13.4" y="2.2" width="3" height="6" fill="#dfe3f4" stroke="#7687cc" stroke-width="0.9"/>
<path d="M3.2 9.5 L10 3.4 L16.8 9.5 V17.8 H3.2 Z" fill="url(#hg1673)" stroke="#6c7ec8" stroke-width="1.15"/>
<path d="M0.8 10.2 L10 1.4 L19.2 10.2" fill="none" stroke="#5f9e2c" stroke-width="2.6" stroke-linejoin="miter"/>
<path d="M1.2 9.6 L10 1.2 L18.8 9.6" fill="none" stroke="#8cc850" stroke-width="1.1"/>
<rect x="7.9" y="10.6" width="4.2" height="7.4" fill="#f2b25c" stroke="#bc6214" stroke-width="1.1"/></svg>
<svg class="r" style="left:136.2px;top:344.8px;" width="20" height="19" viewBox="0 0 20 19"><defs><linearGradient id="hg1706" x1="0" y1="0" x2="0" y2="1"><stop offset="0" stop-color="#fff"/><stop offset="1" stop-color="#dfe4f3"/></linearGradient></defs>
<rect x="13.4" y="2.2" width="3" height="6" fill="#dfe3f4" stroke="#7687cc" stroke-width="0.9"/>
<path d="M3.2 9.5 L10 3.4 L16.8 9.5 V17.8 H3.2 Z" fill="url(#hg1706)" stroke="#6c7ec8" stroke-width="1.15"/>
<path d="M0.8 10.2 L10 1.4 L19.2 10.2" fill="none" stroke="#5f9e2c" stroke-width="2.6" stroke-linejoin="miter"/>
<path d="M1.2 9.6 L10 1.2 L18.8 9.6" fill="none" stroke="#8cc850" stroke-width="1.1"/>
<rect x="7.9" y="10.6" width="4.2" height="7.4" fill="#f2b25c" stroke="#bc6214" stroke-width="1.1"/></svg>
<span class="t" style="left:164.50px;top:317.00px;font-size:13px;line-height:13px;color:#222;letter-spacing:-0.011px;transform-origin:0 11.00px;transform:scaleY(1.1);">Lielā zāle</span>
<span class="t" style="left:164.50px;top:351.00px;font-size:13px;line-height:13px;color:#222;letter-spacing:0.062px;transform-origin:0 11.00px;transform:scaleY(1.1);">Mazā zāle</span>
<div class="r" style="left:59px;top:524px;width:330px;height:389px;background:#fff;border:1px solid #c9c9c9;box-sizing:border-box;"></div>
<div class="r" style="left:59px;top:524px;width:330px;height:40px;background:#00a8ff;"></div>
<svg class="r" style="left:64.7px;top:533.6px;" width="18" height="18" viewBox="0 0 18 18"><defs><radialGradient id="uh986" cx="0.4" cy="0.35" r="0.7"><stop offset="0" stop-color="#f6d2b0"/><stop offset="1" stop-color="#c98a58"/></radialGradient>
<linearGradient id="ub986" x1="0" y1="0" x2="0" y2="1"><stop offset="0" stop-color="#9bd24a"/><stop offset="1" stop-color="#4f9a1e"/></linearGradient></defs>
<path d="M0.6 17 Q0.6 12.6 5.5 11.8 L9 13.4 L12.5 11.8 Q17.4 12.6 17.4 17 Q9 18.6 0.6 17Z" fill="url(#ub986)" stroke="#4a8a1c" stroke-width="0.6"/>
<path d="M7 9 H11 V12.4 L9 13.6 L7 12.4Z" fill="#d9a273"/>
<ellipse cx="9" cy="6" rx="4.1" ry="5" fill="url(#uh986)"/>
<path d="M4.6 6.2 Q3.8 0.6 9 0.4 Q14.4 0.6 13.4 6.4 Q12.6 3.4 9 3.2 Q5.6 3.4 4.6 6.2Z" fill="#a8501e"/></svg>
<span class="t" style="left:88.80px;top:538.20px;font-size:13px;line-height:13px;color:#fff;letter-spacing:0.405px;font-weight:bold;transform-origin:0.80px 11.00px;transform:scale(1.08,1.06);">Klāt</span>
<div class="r" style="left:326px;top:539.2px;width:12px;height:9px;border:1px solid #fff;border-top-width:2.5px;box-sizing:border-box;"></div>
<svg class="r" style="left:363.6px;top:539.2px;" width="9.2" height="10.6" viewBox="0 0 9.2 10.6"><path d="M1.8 0.6 H7.4" stroke="#fff" stroke-width="1.2"/><rect x="2.7" y="0.6" width="3.9" height="5" fill="none" stroke="#fff" stroke-width="1.1"/><rect x="4.9" y="0.6" width="1.8" height="5" fill="#fff"/><path d="M0.4 5.9 H8.8" stroke="#fff" stroke-width="1.3"/><path d="M4.6 6 V10.4" stroke="#fff" stroke-width="1.2"/></svg>
<span class="t" style="left:64.20px;top:574.00px;font-size:13px;line-height:13px;color:#222;letter-spacing:0.250px;transform-origin:0 11.00px;transform:scaleY(1.1);">kartes numurs</span>
<span class="t" style="left:63.00px;top:604.00px;font-size:13px;line-height:13px;color:#222;letter-spacing:0.025px;transform-origin:0 11.00px;transform:scaleY(1.1);">Pilnais vārds</span>
<div class="r" style="left:163.5px;top:569.5px;width:143px;height:23px;background:#fff;border:1px solid #c2c2c2;box-sizing:border-box;"></div>
<div class="r" style="left:163.5px;top:599.3px;width:143px;height:23px;background:#fff;border:1px solid #c2c2c2;box-sizing:border-box;"></div>
<div class="r" style="left:310px;top:567px;width:35.5px;height:56.5px;background:linear-gradient(#f6f6f6,#e9e9e9);border:1px solid #d2d2d2;border-radius:3px;box-sizing:border-box;"></div>
<svg class="r" style="left:317.9px;top:585.9px;" width="22" height="22" viewBox="0 0 22 22"><defs><radialGradient id="mg2075" cx="0.4" cy="0.35" r="0.75"><stop offset="0" stop-color="#f0f8ff"/><stop offset="0.55" stop-color="#a8d2f8"/><stop offset="1" stop-color="#5a9ae4"/></radialGradient></defs>
<path d="M11.4 11.6 L19.6 19.8" stroke="#c08424" stroke-width="3.6" stroke-linecap="round"/>
<path d="M11.6 11.8 L19.4 19.6" stroke="#f8c658" stroke-width="2" stroke-linecap="round"/>
<circle cx="7" cy="7" r="5.9" fill="url(#mg2075)" stroke="#4f86d4" stroke-width="1.4"/>
<path d="M3.4 6 Q4.2 3.4 7 3" stroke="#fff" stroke-width="1.1" fill="none" opacity="0.9"/></svg>
<svg class="r" style="left:357.3px;top:584.8px;" width="18.2" height="20.6" viewBox="0 0 18 20.5"><defs><linearGradient id="lk942" x1="0" y1="0" x2="1" y2="1"><stop offset="0" stop-color="#f4e08a"/><stop offset="1" stop-color="#c9a63a"/></linearGradient></defs>
<path d="M4 10 V6.2 Q4 1.2 9 1.2 Q14 1.2 14 6.2 V10" fill="none" stroke="#8a8a8a" stroke-width="2.6"/>
<path d="M4 10 V6.2 Q4 1.2 9 1.2 Q14 1.2 14 6.2 V10" fill="none" stroke="#d6d6d6" stroke-width="1"/>
<rect x="0.8" y="8.6" width="16.4" height="11.2" rx="1.6" fill="url(#lk942)" stroke="#9a7a1c" stroke-width="1"/>
<path d="M2 10 H16" stroke="#fff4b8" stroke-width="1" opacity="0.8"/></svg>
<div class="r" style="left:63px;top:628.5px;width:322px;height:249.5px;background:#fff;border:1px solid #c9c9c9;box-sizing:border-box;"></div>
<div class="r" style="left:63px;top:628.5px;width:322px;height:34px;background:#f5f5f5;border-top:2px solid #b7b7b7;border-left:2px solid #b7b7b7;border-right:1.5px solid #b7b7b7;border-bottom:1px solid #c4c4c4;box-sizing:border-box;"></div>
<div class="r" style="left:238px;top:630.5px;width:1px;height:31px;background:#bdbdbd;"></div>
<div class="r" style="left:325.2px;top:630.5px;width:1px;height:31px;background:#bdbdbd;"></div>
<span class="t" style="left:65.80px;top:641.00px;font-size:13px;line-height:13px;color:#222;letter-spacing:0.200px;transform-origin:0 11.00px;transform:scaleY(1.1);">Klienti - 0</span>
<span class="t" style="left:240.90px;top:641.00px;font-size:13px;line-height:13px;color:#222;letter-spacing:0.650px;transform-origin:0 11.00px;transform:scaleY(1.1);">Karte</span>
<span class="t" style="left:328.50px;top:641.00px;font-size:13px;line-height:13px;color:#222;transform-origin:0 11.00px;transform:scaleY(1.1);">Nāca</span>
<div class="r" style="left:63px;top:877px;width:322px;height:32px;background:#fff;border:1px solid #c9c9c9;box-sizing:border-box;"></div>
<div class="r" style="left:63px;top:878px;width:244px;height:30.5px;background:#dcdcdc;"></div>
<div class="r" style="left:62.6px;top:878px;width:60.6px;height:30.6px;background:linear-gradient(#f6f6f6,#e9e9e9);border:1px solid #d2d2d2;border-radius:3px;box-sizing:border-box;border-radius:0 0 4px 4px;border-top-color:#c2c2c2;"></div>
<div class="r" style="left:123.7px;top:878px;width:60.6px;height:30.6px;background:linear-gradient(#f6f6f6,#e9e9e9);border:1px solid #d2d2d2;border-radius:3px;box-sizing:border-box;border-radius:0 0 4px 4px;border-top-color:#c2c2c2;"></div>
<div class="r" style="left:184.9px;top:878px;width:60.6px;height:30.6px;background:linear-gradient(#f6f6f6,#e9e9e9);border:1px solid #d2d2d2;border-radius:3px;box-sizing:border-box;border-radius:0 0 4px 4px;border-top-color:#c2c2c2;"></div>
<div class="r" style="left:246px;top:878px;width:60.6px;height:30.6px;background:linear-gradient(#f6f6f6,#e9e9e9);border:1px solid #d2d2d2;border-radius:3px;box-sizing:border-box;border-radius:0 0 4px 4px;border-top-color:#c2c2c2;"></div>
<div class="r" style="left:63px;top:877px;width:322px;height:1px;background:#bcbcbc;"></div>
<svg class="r" style="left:84.6px;top:882.5px;" width="16" height="20.5" viewBox="0 0 16 20.5"><path d="M3.2 19.4 Q1 17 1 13 L1.2 8.4 Q1.4 7 2.6 7.2 Q3.6 7.4 3.6 8.6 V5 Q3.8 3.4 5 3.6 Q6 3.8 6 5 V2.4 Q6.2 0.8 7.6 0.8 Q9 0.8 9 2.4 V4 Q9.4 2.8 10.6 3 Q11.8 3.2 11.8 4.6 V7.4 Q12.2 6.2 13.4 6.6 Q14.6 7 14.4 8.6 L14 14 Q13.8 17.6 12 19.4 Z" fill="#f6d6cc" stroke="#a496cc" stroke-width="1.1"/><path d="M6 5 V9.6 M9 4 V9.6 M11.8 7.4 V10" stroke="#a496cc" stroke-width="0.9" fill="none"/></svg>
<svg class="r" style="left:144px;top:882.9px;" width="19.8" height="19.8" viewBox="0 0 19.8 19.8"><circle cx="9.9" cy="9.9" r="9.9" fill="#3f7cbc"/><circle cx="9.9" cy="5.3" r="1.7" fill="#fff"/><rect x="8.4" y="8.1" width="3" height="7.6" rx="0.6" fill="#fff"/></svg>
<svg class="r" style="left:205.5px;top:881.5px;" width="20" height="22" viewBox="0 0 20 22"><path d="M1 20.5 L8.6 11.4" stroke="#555" stroke-width="1.3"/><path d="M9.6 3.4 L13.4 0.8 L19 6.8 L16.2 9.8 L15.2 9 L12.8 13 Q13.8 15 12.8 16.2 L4.4 8 Q6 7 7.8 8 L11.2 5 Z" fill="#4eb848" stroke="#2f9a36" stroke-width="0.6"/></svg>
<svg class="r" style="left:266px;top:882.5px;" width="21" height="20.5" viewBox="0 0 21 20.5"><defs><linearGradient id="bl" x1="0" y1="0" x2="1" y2="0.6"><stop offset="0" stop-color="#ffd84a"/><stop offset="1" stop-color="#d99a10"/></linearGradient></defs><path d="M1.4 4.6 Q0.4 2.6 2.4 1.2 Q4.4 0 6 1.4 Q14 0.6 19.8 7.4 L7 19.6 Q5.2 20.4 4.8 18.6 Q6.6 10 1.4 4.6 Z" fill="url(#bl)" stroke="#c88a0c" stroke-width="0.7"/><circle cx="13" cy="16" r="2.2" fill="#f2c030" stroke="#c88a0c" stroke-width="0.7"/><path d="M4 4 Q9 8 7.4 17" stroke="#fff2a8" stroke-width="1" fill="none" opacity="0.7"/></svg>
<div class="r" style="left:399px;top:165px;width:398px;height:721px;background:#fff;border:2px solid #c8c8c8;box-sizing:border-box;"></div>
<div class="r" style="left:401px;top:167px;width:373px;height:66px;background:#f7f7f7;"></div>
<div class="r" style="left:401px;top:199px;width:373px;height:1px;background:#c4c4c4;"></div>
<div class="r" style="left:401px;top:233px;width:373px;height:1px;background:#c4c4c4;"></div>
<div class="r" style="left:523px;top:200px;width:1px;height:33px;background:#c4c4c4;"></div>
<div class="r" style="left:572.8px;top:200px;width:1px;height:33px;background:#c4c4c4;"></div>
<div class="r" style="left:623px;top:200px;width:1px;height:33px;background:#c4c4c4;"></div>
<span class="t" style="left:570.90px;top:178.20px;font-size:13px;line-height:13px;color:#222;letter-spacing:-0.058px;transform-origin:0 11.00px;transform:scaleY(1.1);">1. Lielā zāle</span>
<span class="t" style="left:424.50px;top:211.60px;font-size:13px;line-height:13px;color:#222;letter-spacing:0.320px;transform-origin:0 11.00px;transform:scaleY(1.1);">Datums</span>
<svg class="r" style="left:502px;top:215.6px;" width="10.8" height="5.8" viewBox="0 0 10.8 5.8"><path d="M0 5.8 L5.4 0 L10.8 5.8Z" fill="#555"/></svg>
<span class="t" style="left:531.90px;top:211.60px;font-size:13px;line-height:13px;color:#222;letter-spacing:-0.025px;transform-origin:0 11.00px;transform:scaleY(1.1);">Laiks</span>
<span class="t" style="left:579.00px;top:211.60px;font-size:13px;line-height:13px;color:#222;letter-spacing:0.033px;transform-origin:0 11.00px;transform:scaleY(1.1);">Cilvēki</span>
<span class="t" style="left:691.40px;top:211.60px;font-size:13px;line-height:13px;color:#222;letter-spacing:0.614px;transform-origin:0 11.00px;transform:scaleY(1.1);">Ieraksts</span>
<div class="c" style="left:401px;top:233.5px;width:373px;height:629.5px;">
<div class="r" style="left:0px;top:0px;width:374px;height:34px;background:#d9f1ff;"></div>
<div class="r" style="left:33px;top:0px;width:341px;height:34px;background:#0080c6;"></div>
<svg class="r" style="left:6.6px;top:7.8px;" width="19" height="19" viewBox="0 0 19 19"><circle cx="9.5" cy="9.5" r="7.35" fill="none" stroke="#3c3c3c" stroke-width="1.3"/><path d="M6.3 6.3 L12.5 12.5 M7.3 12.7 L12.7 12.7 L12.7 7.3" fill="none" stroke="#3c3c3c" stroke-width="1.5"/></svg>
<span class="t" style="left:33.50px;top:3.30px;font-size:13px;line-height:13px;color:#00e6ff;letter-spacing:0.522px;transform-origin:0 11.00px;transform:scaleY(1.1);">22.08.2024</span>
<span class="t" style="left:222.10px;top:3.30px;font-size:13px;line-height:13px;color:#00e6ff;letter-spacing:0.400px;transform-origin:0 11.00px;transform:scaleY(1.1);">Ceturtdiena</span>
<div class="r" style="left:0px;top:34px;width:374px;height:20px;background:#ddfae2;"></div>
<span class="t" style="left:122.50px;top:36.60px;font-size:13px;line-height:13px;color:#8c8c95;letter-spacing:0.420px;transform-origin:0 11.00px;transform:scaleY(1.1);">08:00</span>
<span class="t" style="left:172.40px;top:36.60px;font-size:13px;line-height:13px;color:#8c8c95;letter-spacing:0.400px;transform-origin:0 11.00px;transform:scaleY(1.1);">0/0</span>
<span class="t" style="left:221.50px;top:36.60px;font-size:13px;line-height:13px;color:#8c8c95;letter-spacing:0.144px;transform-origin:0 11.00px;transform:scaleY(1.1);">Krump deja</span>
<svg class="r" style="left:71px;top:32px;overflow:visible" width="24" height="24" viewBox="-12 -12 24 24"><path d="M-8.8 7.2 Q-2 4 2.2 -2 L5 -1.6 L5.2 7.4 Q-2 8 -8.8 7.2Z" fill="#2a9fe0"/>
<path d="M-8.8 7.2 Q-3 5.4 0.5 1.5 L1 7.4Z" fill="#4fb8ee" opacity="0.7"/>
<rect x="4" y="-3.6" width="1.7" height="10.8" fill="#4a4038"/>
<path d="M4.6 7.2 H6.6" stroke="#333" stroke-width="1"/>
<path d="M1.6 -2.4 L3.6 -3.4 L4.4 -1.8" fill="#e8b890"/>
<circle cx="-1" cy="-4.6" r="1.7" fill="#b07840"/>
<circle cx="-0.4" cy="-3.2" r="1.2" fill="#e8b890"/>
<circle cx="2.5" cy="-6" r="1.6" fill="#a87848"/>
<circle cx="2.8" cy="-4.8" r="1.1" fill="#e0ac84"/>
<path d="M4.8 -3.2 L8 -4.8" stroke="#9a8a78" stroke-width="1.1"/></svg>
<div class="r" style="left:0px;top:54px;width:374px;height:20px;background:#d9f1ff;"></div>
<span class="t" style="left:122.50px;top:56.60px;font-size:13px;line-height:13px;color:#8c8c95;letter-spacing:0.420px;transform-origin:0 11.00px;transform:scaleY(1.1);">09:00</span>
<span class="t" style="left:172.40px;top:56.60px;font-size:13px;line-height:13px;color:#8c8c95;letter-spacing:0.400px;transform-origin:0 11.00px;transform:scaleY(1.1);">0/0</span>
<span class="t" style="left:221.50px;top:56.60px;font-size:13px;line-height:13px;color:#8c8c95;letter-spacing:0.144px;transform-origin:0 11.00px;transform:scaleY(1.1);">Krump deja</span>
<svg class="r" style="left:71px;top:52px;overflow:visible" width="24" height="24" viewBox="-12 -12 24 24"><path d="M-8.8 7.2 Q-2 4 2.2 -2 L5 -1.6 L5.2 7.4 Q-2 8 -8.8 7.2Z" fill="#2a9fe0"/>
<path d="M-8.8 7.2 Q-3 5.4 0.5 1.5 L1 7.4Z" fill="#4fb8ee" opacity="0.7"/>
<rect x="4" y="-3.6" width="1.7" height="10.8" fill="#4a4038"/>
<path d="M4.6 7.2 H6.6" stroke="#333" stroke-width="1"/>
<path d="M1.6 -2.4 L3.6 -3.4 L4.4 -1.8" fill="#e8b890"/>
<circle cx="-1" cy="-4.6" r="1.7" fill="#b07840"/>
<circle cx="-0.4" cy="-3.2" r="1.2" fill="#e8b890"/>
<circle cx="2.5" cy="-6" r="1.6" fill="#a87848"/>
<circle cx="2.8" cy="-4.8" r="1.1" fill="#e0ac84"/>
<path d="M4.8 -3.2 L8 -4.8" stroke="#9a8a78" stroke-width="1.1"/></svg>
<div class="r" style="left:0px;top:74px;width:374px;height:20px;background:#ddfae2;"></div>
<div class="r" style="left:122.6px;top:74px;width:252px;height:20px;background:#ffffb4;"></div>
<span class="t" style="left:122.50px;top:76.60px;font-size:13px;line-height:13px;color:#000;letter-spacing:0.420px;transform-origin:0 11.00px;transform:scaleY(1.1);">10:00</span>
<span class="t" style="left:172.40px;top:76.60px;font-size:13px;line-height:13px;color:#000;letter-spacing:0.400px;transform-origin:0 11.00px;transform:scaleY(1.1);">0/2</span>
<span class="t" style="left:221.50px;top:76.60px;font-size:13px;line-height:13px;color:#000;letter-spacing:0.144px;transform-origin:0 11.00px;transform:scaleY(1.1);">Krump deja</span>
<svg class="r" style="left:71px;top:72px;overflow:visible" width="24" height="24" viewBox="-12 -12 24 24"><path d="M-8.8 7.2 Q-2 4 2.2 -2 L5 -1.6 L5.2 7.4 Q-2 8 -8.8 7.2Z" fill="#2a9fe0"/>
<path d="M-8.8 7.2 Q-3 5.4 0.5 1.5 L1 7.4Z" fill="#4fb8ee" opacity="0.7"/>
<rect x="4" y="-3.6" width="1.7" height="10.8" fill="#4a4038"/>
<path d="M4.6 7.2 H6.6" stroke="#333" stroke-width="1"/>
<path d="M1.6 -2.4 L3.6 -3.4 L4.4 -1.8" fill="#e8b890"/>
<circle cx="-1" cy="-4.6" r="1.7" fill="#b07840"/>
<circle cx="-0.4" cy="-3.2" r="1.2" fill="#e8b890"/>
<circle cx="2.5" cy="-6" r="1.6" fill="#a87848"/>
<circle cx="2.8" cy="-4.8" r="1.1" fill="#e0ac84"/>
<path d="M4.8 -3.2 L8 -4.8" stroke="#9a8a78" stroke-width="1.1"/></svg>
<div class="r" style="left:0px;top:94px;width:374px;height:20px;background:#d9f1ff;"></div>
<span class="t" style="left:122.50px;top:96.60px;font-size:13px;line-height:13px;color:#8c8c95;letter-spacing:0.420px;transform-origin:0 11.00px;transform:scaleY(1.1);">11:00</span>
<span class="t" style="left:172.40px;top:96.60px;font-size:13px;line-height:13px;color:#8c8c95;letter-spacing:0.400px;transform-origin:0 11.00px;transform:scaleY(1.1);">0/0</span>
<span class="t" style="left:221.50px;top:96.60px;font-size:13px;line-height:13px;color:#8c8c95;letter-spacing:0.144px;transform-origin:0 11.00px;transform:scaleY(1.1);">Krump deja</span>
<svg class="r" style="left:71px;top:92px;overflow:visible" width="24" height="24" viewBox="-12 -12 24 24"><path d="M-8.8 7.2 Q-2 4 2.2 -2 L5 -1.6 L5.2 7.4 Q-2 8 -8.8 7.2Z" fill="#2a9fe0"/>
<path d="M-8.8 7.2 Q-3 5.4 0.5 1.5 L1 7.4Z" fill="#4fb8ee" opacity="0.7"/>
<rect x="4" y="-3.6" width="1.7" height="10.8" fill="#4a4038"/>
<path d="M4.6 7.2 H6.6" stroke="#333" stroke-width="1"/>
<path d="M1.6 -2.4 L3.6 -3.4 L4.4 -1.8" fill="#e8b890"/>
<circle cx="-1" cy="-4.6" r="1.7" fill="#b07840"/>
<circle cx="-0.4" cy="-3.2" r="1.2" fill="#e8b890"/>
<circle cx="2.5" cy="-6" r="1.6" fill="#a87848"/>
<circle cx="2.8" cy="-4.8" r="1.1" fill="#e0ac84"/>
<path d="M4.8 -3.2 L8 -4.8" stroke="#9a8a78" stroke-width="1.1"/></svg>
<div class="r" style="left:0px;top:114px;width:374px;height:20px;background:#ddfae2;"></div>
<span class="t" style="left:122.50px;top:116.60px;font-size:13px;line-height:13px;color:#8c8c95;letter-spacing:0.420px;transform-origin:0 11.00px;transform:scaleY(1.1);">12:00</span>
<span class="t" style="left:172.40px;top:116.60px;font-size:13px;line-height:13px;color:#8c8c95;letter-spacing:0.400px;transform-origin:0 11.00px;transform:scaleY(1.1);">0/0</span>
<span class="t" style="left:221.50px;top:116.60px;font-size:13px;line-height:13px;color:#8c8c95;letter-spacing:0.144px;transform-origin:0 11.00px;transform:scaleY(1.1);">Krump deja</span>
<svg class="r" style="left:71px;top:112px;overflow:visible" width="24" height="24" viewBox="-12 -12 24 24"><path d="M-8.8 7.2 Q-2 4 2.2 -2 L5 -1.6 L5.2 7.4 Q-2 8 -8.8 7.2Z" fill="#2a9fe0"/>
<path d="M-8.8 7.2 Q-3 5.4 0.5 1.5 L1 7.4Z" fill="#4fb8ee" opacity="0.7"/>
<rect x="4" y="-3.6" width="1.7" height="10.8" fill="#4a4038"/>
<path d="M4.6 7.2 H6.6" stroke="#333" stroke-width="1"/>
<path d="M1.6 -2.4 L3.6 -3.4 L4.4 -1.8" fill="#e8b890"/>
<circle cx="-1" cy="-4.6" r="1.7" fill="#b07840"/>
<circle cx="-0.4" cy="-3.2" r="1.2" fill="#e8b890"/>
<circle cx="2.5" cy="-6" r="1.6" fill="#a87848"/>
<circle cx="2.8" cy="-4.8" r="1.1" fill="#e0ac84"/>
<path d="M4.8 -3.2 L8 -4.8" stroke="#9a8a78" stroke-width="1.1"/></svg>
<div class="r" style="left:0px;top:134px;width:374px;height:60px;background:#d9f1ff;"></div>
<span class="t" style="left:122.50px;top:136.60px;font-size:13px;line-height:13px;color:#8c8c95;letter-spacing:0.420px;transform-origin:0 11.00px;transform:scaleY(1.1);">13:00</span>
<span class="t" style="left:172.40px;top:136.60px;font-size:13px;line-height:13px;color:#8c8c95;letter-spacing:0.400px;transform-origin:0 11.00px;transform:scaleY(1.1);">0/0</span>
<span class="t" style="left:221.80px;top:136.60px;font-size:13px;line-height:13px;color:#8c8c95;letter-spacing:0.222px;transform-origin:0 11.00px;transform:scaleY(1.1);">Mājas deja</span>
<span class="t" style="left:222.60px;top:152.60px;font-size:13px;line-height:13px;color:#8c8c95;letter-spacing:0.158px;transform-origin:0 11.00px;transform:scaleY(1.1);">2. darbinieks</span>
<span class="t" style="left:222.20px;top:168.60px;font-size:13px;line-height:13px;color:#8c8c95;letter-spacing:0.179px;transform-origin:0 11.00px;transform:scaleY(1.1);">Grupa: Children</span>
<svg class="r" style="left:71px;top:152px;overflow:visible" width="24" height="24" viewBox="-12 -12 24 24"><path d="M-6.2 9 Q-6.6 4 -4.6 2.6 Q-1 1.6 1.6 3.2 Q5 5 5.6 7 Q5.4 8.6 3.6 8.4 L-3 8.6 Q-5 9.6 -6.2 9Z" fill="#d8202c"/>
<path d="M-5 4 Q-1 3 4 6.6" stroke="#b01020" stroke-width="0.8" fill="none"/>
<path d="M-2.6 -5.4 Q-2.8 -1 -1.6 2.6 L0.6 2.6 Q0.2 -2 -0.8 -5.2Z" fill="#eec0a0"/>
<path d="M-1.8 -1 L0.2 2.8 L-1.8 2.8Z" fill="#d8202c"/>
<ellipse cx="-3.2" cy="-7.3" rx="2.3" ry="1.7" transform="rotate(-20 -3.2 -7.3)" fill="#d8202c"/>
<ellipse cx="0.7" cy="-2.2" rx="0.9" ry="2.9" fill="#3a1418"/></svg>
<div class="r" style="left:0px;top:194px;width:374px;height:60px;background:#ddfae2;"></div>
<span class="t" style="left:122.50px;top:196.60px;font-size:13px;line-height:13px;color:#8c8c95;letter-spacing:0.420px;transform-origin:0 11.00px;transform:scaleY(1.1);">14:00</span>
<span class="t" style="left:172.40px;top:196.60px;font-size:13px;line-height:13px;color:#8c8c95;letter-spacing:0.400px;transform-origin:0 11.00px;transform:scaleY(1.1);">0/0</span>
<span class="t" style="left:221.80px;top:196.60px;font-size:13px;line-height:13px;color:#8c8c95;letter-spacing:0.222px;transform-origin:0 11.00px;transform:scaleY(1.1);">Mājas deja</span>
<span class="t" style="left:222.60px;top:212.60px;font-size:13px;line-height:13px;color:#8c8c95;letter-spacing:0.158px;transform-origin:0 11.00px;transform:scaleY(1.1);">2. darbinieks</span>
<span class="t" style="left:222.20px;top:228.60px;font-size:13px;line-height:13px;color:#8c8c95;letter-spacing:0.179px;transform-origin:0 11.00px;transform:scaleY(1.1);">Grupa: Children</span>
<svg class="r" style="left:71px;top:212px;overflow:visible" width="24" height="24" viewBox="-12 -12 24 24"><path d="M-6.2 9 Q-6.6 4 -4.6 2.6 Q-1 1.6 1.6 3.2 Q5 5 5.6 7 Q5.4 8.6 3.6 8.4 L-3 8.6 Q-5 9.6 -6.2 9Z" fill="#d8202c"/>
<path d="M-5 4 Q-1 3 4 6.6" stroke="#b01020" stroke-width="0.8" fill="none"/>
<path d="M-2.6 -5.4 Q-2.8 -1 -1.6 2.6 L0.6 2.6 Q0.2 -2 -0.8 -5.2Z" fill="#eec0a0"/>
<path d="M-1.8 -1 L0.2 2.8 L-1.8 2.8Z" fill="#d8202c"/>
<ellipse cx="-3.2" cy="-7.3" rx="2.3" ry="1.7" transform="rotate(-20 -3.2 -7.3)" fill="#d8202c"/>
<ellipse cx="0.7" cy="-2.2" rx="0.9" ry="2.9" fill="#3a1418"/></svg>
<div class="r" style="left:0px;top:254px;width:374px;height:60px;background:#d9f1ff;"></div>
<div class="r" style="left:122.6px;top:254px;width:252px;height:60px;background:#ffffb4;"></div>
<span class="t" style="left:122.50px;top:256.60px;font-size:13px;line-height:13px;color:#c80000;letter-spacing:0.420px;transform-origin:0 11.00px;transform:scaleY(1.1);">15:00</span>
<span class="t" style="left:172.40px;top:256.60px;font-size:13px;line-height:13px;color:#c80000;letter-spacing:0.400px;transform-origin:0 11.00px;transform:scaleY(1.1);">0/1</span>
<span class="t" style="left:221.80px;top:256.60px;font-size:13px;line-height:13px;color:#c80000;letter-spacing:0.222px;transform-origin:0 11.00px;transform:scaleY(1.1);">Mājas deja</span>
<span class="t" style="left:222.60px;top:272.60px;font-size:13px;line-height:13px;color:#c80000;letter-spacing:0.158px;transform-origin:0 11.00px;transform:scaleY(1.1);">2. darbinieks</span>
<span class="t" style="left:222.20px;top:288.60px;font-size:13px;line-height:13px;color:#c80000;letter-spacing:0.179px;transform-origin:0 11.00px;transform:scaleY(1.1);">Grupa: Children</span>
<svg class="r" style="left:71px;top:272px;overflow:visible" width="24" height="24" viewBox="-12 -12 24 24"><path d="M-6.2 9 Q-6.6 4 -4.6 2.6 Q-1 1.6 1.6 3.2 Q5 5 5.6 7 Q5.4 8.6 3.6 8.4 L-3 8.6 Q-5 9.6 -6.2 9Z" fill="#d8202c"/>
<path d="M-5 4 Q-1 3 4 6.6" stroke="#b01020" stroke-width="0.8" fill="none"/>
<path d="M-2.6 -5.4 Q-2.8 -1 -1.6 2.6 L0.6 2.6 Q0.2 -2 -0.8 -5.2Z" fill="#eec0a0"/>
<path d="M-1.8 -1 L0.2 2.8 L-1.8 2.8Z" fill="#d8202c"/>
<ellipse cx="-3.2" cy="-7.3" rx="2.3" ry="1.7" transform="rotate(-20 -3.2 -7.3)" fill="#d8202c"/>
<ellipse cx="0.7" cy="-2.2" rx="0.9" ry="2.9" fill="#3a1418"/></svg>
<div class="r" style="left:0px;top:314px;width:374px;height:60px;background:#ddfae2;"></div>
<span class="t" style="left:122.50px;top:316.60px;font-size:13px;line-height:13px;color:#8c8c95;letter-spacing:0.420px;transform-origin:0 11.00px;transform:scaleY(1.1);">16:00</span>
<span class="t" style="left:172.40px;top:316.60px;font-size:13px;line-height:13px;color:#8c8c95;letter-spacing:0.400px;transform-origin:0 11.00px;transform:scaleY(1.1);">0/0</span>
<span class="t" style="left:221.80px;top:316.60px;font-size:13px;line-height:13px;color:#8c8c95;letter-spacing:0.222px;transform-origin:0 11.00px;transform:scaleY(1.1);">Mājas deja</span>
<span class="t" style="left:222.60px;top:332.60px;font-size:13px;line-height:13px;color:#8c8c95;letter-spacing:0.158px;transform-origin:0 11.00px;transform:scaleY(1.1);">2. darbinieks</span>
<span class="t" style="left:222.20px;top:348.60px;font-size:13px;line-height:13px;color:#8c8c95;letter-spacing:0.179px;transform-origin:0 11.00px;transform:scaleY(1.1);">Grupa: Children</span>
<svg class="r" style="left:71px;top:332px;overflow:visible" width="24" height="24" viewBox="-12 -12 24 24"><path d="M-6.2 9 Q-6.6 4 -4.6 2.6 Q-1 1.6 1.6 3.2 Q5 5 5.6 7 Q5.4 8.6 3.6 8.4 L-3 8.6 Q-5 9.6 -6.2 9Z" fill="#d8202c"/>
<path d="M-5 4 Q-1 3 4 6.6" stroke="#b01020" stroke-width="0.8" fill="none"/>
<path d="M-2.6 -5.4 Q-2.8 -1 -1.6 2.6 L0.6 2.6 Q0.2 -2 -0.8 -5.2Z" fill="#eec0a0"/>
<path d="M-1.8 -1 L0.2 2.8 L-1.8 2.8Z" fill="#d8202c"/>
<ellipse cx="-3.2" cy="-7.3" rx="2.3" ry="1.7" transform="rotate(-20 -3.2 -7.3)" fill="#d8202c"/>
<ellipse cx="0.7" cy="-2.2" rx="0.9" ry="2.9" fill="#3a1418"/></svg>
<div class="r" style="left:0px;top:374px;width:374px;height:60px;background:#d9f1ff;"></div>
<span class="t" style="left:122.50px;top:376.60px;font-size:13px;line-height:13px;color:#8c8c95;letter-spacing:0.420px;transform-origin:0 11.00px;transform:scaleY(1.1);">17:00</span>
<span class="t" style="left:172.40px;top:376.60px;font-size:13px;line-height:13px;color:#8c8c95;letter-spacing:0.400px;transform-origin:0 11.00px;transform:scaleY(1.1);">0/0</span>
<span class="t" style="left:221.80px;top:376.60px;font-size:13px;line-height:13px;color:#8c8c95;letter-spacing:0.222px;transform-origin:0 11.00px;transform:scaleY(1.1);">Mājas deja</span>
<span class="t" style="left:222.60px;top:392.60px;font-size:13px;line-height:13px;color:#8c8c95;letter-spacing:0.158px;transform-origin:0 11.00px;transform:scaleY(1.1);">2. darbinieks</span>
<span class="t" style="left:222.20px;top:408.60px;font-size:13px;line-height:13px;color:#8c8c95;letter-spacing:0.179px;transform-origin:0 11.00px;transform:scaleY(1.1);">Grupa: Children</span>
<svg class="r" style="left:71px;top:392px;overflow:visible" width="24" height="24" viewBox="-12 -12 24 24"><path d="M-6.2 9 Q-6.6 4 -4.6 2.6 Q-1 1.6 1.6 3.2 Q5 5 5.6 7 Q5.4 8.6 3.6 8.4 L-3 8.6 Q-5 9.6 -6.2 9Z" fill="#d8202c"/>
<path d="M-5 4 Q-1 3 4 6.6" stroke="#b01020" stroke-width="0.8" fill="none"/>
<path d="M-2.6 -5.4 Q-2.8 -1 -1.6 2.6 L0.6 2.6 Q0.2 -2 -0.8 -5.2Z" fill="#eec0a0"/>
<path d="M-1.8 -1 L0.2 2.8 L-1.8 2.8Z" fill="#d8202c"/>
<ellipse cx="-3.2" cy="-7.3" rx="2.3" ry="1.7" transform="rotate(-20 -3.2 -7.3)" fill="#d8202c"/>
<ellipse cx="0.7" cy="-2.2" rx="0.9" ry="2.9" fill="#3a1418"/></svg>
<div class="r" style="left:0px;top:434px;width:374px;height:20px;background:#ddfae2;"></div>
<div class="r" style="left:122.6px;top:434px;width:252px;height:20px;background:#ffffb4;"></div>
<span class="t" style="left:122.50px;top:436.60px;font-size:13px;line-height:13px;color:#000;letter-spacing:0.420px;transform-origin:0 11.00px;transform:scaleY(1.1);">18:00</span>
<span class="t" style="left:172.40px;top:436.60px;font-size:13px;line-height:13px;color:#000;letter-spacing:0.400px;transform-origin:0 11.00px;transform:scaleY(1.1);">0/1</span>
<span class="t" style="left:222.80px;top:436.60px;font-size:13px;line-height:13px;color:#000;letter-spacing:0.167px;transform-origin:0 11.00px;transform:scaleY(1.1);">Waacking deja</span>
<svg class="r" style="left:71px;top:432px;overflow:visible" width="24" height="24" viewBox="-12 -12 24 24"><path d="M-3.4 -2.4 L-8.6 -6.8" stroke="#6aae3a" stroke-width="1.9" stroke-linecap="round"/>
<path d="M2.6 -2.4 L8 -6.4" stroke="#6aae3a" stroke-width="1.9" stroke-linecap="round"/>
<circle cx="-9" cy="-7.2" r="1.2" fill="#f8d070"/><circle cx="8.8" cy="-7" r="1.2" fill="#f8d070"/>
<rect x="-4" y="-3.6" width="7.6" height="6.4" rx="1" fill="#f070b0"/>
<path d="M-1.6 2.6 L-0.8 -3 L1 -3 L1.8 2.6Z" fill="#6cc048"/>
<rect x="-6.2" y="2.2" width="11.2" height="7.6" rx="2.6" fill="#c08850"/>
<rect x="-6.2" y="2.6" width="2.4" height="6.8" rx="1.2" fill="#f0a040"/>
<ellipse cx="-0.5" cy="-7" rx="1.7" ry="2" fill="#e8503c"/>
<circle cx="-0.5" cy="-4.4" r="1.3" fill="#ffc848"/></svg>
<div class="r" style="left:0px;top:454px;width:374px;height:20px;background:#d9f1ff;"></div>
<span class="t" style="left:122.50px;top:456.60px;font-size:13px;line-height:13px;color:#8c8c95;letter-spacing:0.420px;transform-origin:0 11.00px;transform:scaleY(1.1);">19:00</span>
<span class="t" style="left:172.40px;top:456.60px;font-size:13px;line-height:13px;color:#8c8c95;letter-spacing:0.400px;transform-origin:0 11.00px;transform:scaleY(1.1);">0/0</span>
<span class="t" style="left:222.80px;top:456.60px;font-size:13px;line-height:13px;color:#8c8c95;letter-spacing:0.167px;transform-origin:0 11.00px;transform:scaleY(1.1);">Waacking deja</span>
<svg class="r" style="left:71px;top:452px;overflow:visible" width="24" height="24" viewBox="-12 -12 24 24"><path d="M-3.4 -2.4 L-8.6 -6.8" stroke="#6aae3a" stroke-width="1.9" stroke-linecap="round"/>
<path d="M2.6 -2.4 L8 -6.4" stroke="#6aae3a" stroke-width="1.9" stroke-linecap="round"/>
<circle cx="-9" cy="-7.2" r="1.2" fill="#f8d070"/><circle cx="8.8" cy="-7" r="1.2" fill="#f8d070"/>
<rect x="-4" y="-3.6" width="7.6" height="6.4" rx="1" fill="#f070b0"/>
<path d="M-1.6 2.6 L-0.8 -3 L1 -3 L1.8 2.6Z" fill="#6cc048"/>
<rect x="-6.2" y="2.2" width="11.2" height="7.6" rx="2.6" fill="#c08850"/>
<rect x="-6.2" y="2.6" width="2.4" height="6.8" rx="1.2" fill="#f0a040"/>
<ellipse cx="-0.5" cy="-7" rx="1.7" ry="2" fill="#e8503c"/>
<circle cx="-0.5" cy="-4.4" r="1.3" fill="#ffc848"/></svg>
<div class="r" style="left:0px;top:474px;width:374px;height:20px;background:#ddfae2;"></div>
<span class="t" style="left:122.50px;top:476.60px;font-size:13px;line-height:13px;color:#8c8c95;letter-spacing:0.420px;transform-origin:0 11.00px;transform:scaleY(1.1);">20:00</span>
<span class="t" style="left:172.40px;top:476.60px;font-size:13px;line-height:13px;color:#8c8c95;letter-spacing:0.400px;transform-origin:0 11.00px;transform:scaleY(1.1);">0/0</span>
<span class="t" style="left:222.80px;top:476.60px;font-size:13px;line-height:13px;color:#8c8c95;letter-spacing:0.167px;transform-origin:0 11.00px;transform:scaleY(1.1);">Waacking deja</span>
<svg class="r" style="left:71px;top:472px;overflow:visible" width="24" height="24" viewBox="-12 -12 24 24"><path d="M-3.4 -2.4 L-8.6 -6.8" stroke="#6aae3a" stroke-width="1.9" stroke-linecap="round"/>
<path d="M2.6 -2.4 L8 -6.4" stroke="#6aae3a" stroke-width="1.9" stroke-linecap="round"/>
<circle cx="-9" cy="-7.2" r="1.2" fill="#f8d070"/><circle cx="8.8" cy="-7" r="1.2" fill="#f8d070"/>
<rect x="-4" y="-3.6" width="7.6" height="6.4" rx="1" fill="#f070b0"/>
<path d="M-1.6 2.6 L-0.8 -3 L1 -3 L1.8 2.6Z" fill="#6cc048"/>
<rect x="-6.2" y="2.2" width="11.2" height="7.6" rx="2.6" fill="#c08850"/>
<rect x="-6.2" y="2.6" width="2.4" height="6.8" rx="1.2" fill="#f0a040"/>
<ellipse cx="-0.5" cy="-7" rx="1.7" ry="2" fill="#e8503c"/>
<circle cx="-0.5" cy="-4.4" r="1.3" fill="#ffc848"/></svg>
<div class="r" style="left:0px;top:494px;width:374px;height:20px;background:#d9f1ff;"></div>
<span class="t" style="left:122.50px;top:496.60px;font-size:13px;line-height:13px;color:#8c8c95;letter-spacing:0.420px;transform-origin:0 11.00px;transform:scaleY(1.1);">21:00</span>
<span class="t" style="left:172.40px;top:496.60px;font-size:13px;line-height:13px;color:#8c8c95;letter-spacing:0.400px;transform-origin:0 11.00px;transform:scaleY(1.1);">0/0</span>
<span class="t" style="left:222.80px;top:496.60px;font-size:13px;line-height:13px;color:#8c8c95;letter-spacing:0.167px;transform-origin:0 11.00px;transform:scaleY(1.1);">Waacking deja</span>
<svg class="r" style="left:71px;top:492px;overflow:visible" width="24" height="24" viewBox="-12 -12 24 24"><path d="M-3.4 -2.4 L-8.6 -6.8" stroke="#6aae3a" stroke-width="1.9" stroke-linecap="round"/>
<path d="M2.6 -2.4 L8 -6.4" stroke="#6aae3a" stroke-width="1.9" stroke-linecap="round"/>
<circle cx="-9" cy="-7.2" r="1.2" fill="#f8d070"/><circle cx="8.8" cy="-7" r="1.2" fill="#f8d070"/>
<rect x="-4" y="-3.6" width="7.6" height="6.4" rx="1" fill="#f070b0"/>
<path d="M-1.6 2.6 L-0.8 -3 L1 -3 L1.8 2.6Z" fill="#6cc048"/>
<rect x="-6.2" y="2.2" width="11.2" height="7.6" rx="2.6" fill="#c08850"/>
<rect x="-6.2" y="2.6" width="2.4" height="6.8" rx="1.2" fill="#f0a040"/>
<ellipse cx="-0.5" cy="-7" rx="1.7" ry="2" fill="#e8503c"/>
<circle cx="-0.5" cy="-4.4" r="1.3" fill="#ffc848"/></svg>
<div class="r" style="left:0px;top:514px;width:374px;height:20px;background:#ddfae2;"></div>
<span class="t" style="left:122.50px;top:516.60px;font-size:13px;line-height:13px;color:#8c8c95;letter-spacing:0.420px;transform-origin:0 11.00px;transform:scaleY(1.1);">22:00</span>
<span class="t" style="left:172.40px;top:516.60px;font-size:13px;line-height:13px;color:#8c8c95;letter-spacing:0.400px;transform-origin:0 11.00px;transform:scaleY(1.1);">0/0</span>
<span class="t" style="left:222.80px;top:516.60px;font-size:13px;line-height:13px;color:#8c8c95;letter-spacing:0.167px;transform-origin:0 11.00px;transform:scaleY(1.1);">Waacking deja</span>
<svg class="r" style="left:71px;top:512px;overflow:visible" width="24" height="24" viewBox="-12 -12 24 24"><path d="M-3.4 -2.4 L-8.6 -6.8" stroke="#6aae3a" stroke-width="1.9" stroke-linecap="round"/>
<path d="M2.6 -2.4 L8 -6.4" stroke="#6aae3a" stroke-width="1.9" stroke-linecap="round"/>
<circle cx="-9" cy="-7.2" r="1.2" fill="#f8d070"/><circle cx="8.8" cy="-7" r="1.2" fill="#f8d070"/>
<rect x="-4" y="-3.6" width="7.6" height="6.4" rx="1" fill="#f070b0"/>
<path d="M-1.6 2.6 L-0.8 -3 L1 -3 L1.8 2.6Z" fill="#6cc048"/>
<rect x="-6.2" y="2.2" width="11.2" height="7.6" rx="2.6" fill="#c08850"/>
<rect x="-6.2" y="2.6" width="2.4" height="6.8" rx="1.2" fill="#f0a040"/>
<ellipse cx="-0.5" cy="-7" rx="1.7" ry="2" fill="#e8503c"/>
<circle cx="-0.5" cy="-4.4" r="1.3" fill="#ffc848"/></svg>
<div class="r" style="left:0px;top:534px;width:374px;height:34px;background:#d9f1ff;"></div>
<div class="r" style="left:33px;top:534px;width:341px;height:34px;background:#0080c6;"></div>
<svg class="r" style="left:6.6px;top:541.8px;" width="19" height="19" viewBox="0 0 19 19"><circle cx="9.5" cy="9.5" r="7.35" fill="none" stroke="#3c3c3c" stroke-width="1.3"/><path d="M6.3 6.3 L12.5 12.5 M7.3 12.7 L12.7 12.7 L12.7 7.3" fill="none" stroke="#3c3c3c" stroke-width="1.5"/></svg>
<span class="t" style="left:33.50px;top:537.30px;font-size:13px;line-height:13px;color:#e4f4ff;letter-spacing:0.522px;transform-origin:0 11.00px;transform:scaleY(1.1);">23.08.2024</span>
<span class="t" style="left:221.60px;top:537.30px;font-size:13px;line-height:13px;color:#e4f4ff;letter-spacing:0.089px;transform-origin:0 11.00px;transform:scaleY(1.1);">Piektdiena</span>
<div class="r" style="left:0px;top:568px;width:374px;height:20px;background:#ddfae2;"></div>
<span class="t" style="left:122.50px;top:570.60px;font-size:13px;line-height:13px;color:#8c8c95;letter-spacing:0.420px;transform-origin:0 11.00px;transform:scaleY(1.1);">08:00</span>
<span class="t" style="left:172.40px;top:570.60px;font-size:13px;line-height:13px;color:#8c8c95;letter-spacing:0.400px;transform-origin:0 11.00px;transform:scaleY(1.1);">0/0</span>
<span class="t" style="left:221.50px;top:570.60px;font-size:13px;line-height:13px;color:#8c8c95;letter-spacing:0.144px;transform-origin:0 11.00px;transform:scaleY(1.1);">Krump deja</span>
<svg class="r" style="left:71px;top:566px;overflow:visible" width="24" height="24" viewBox="-12 -12 24 24"><path d="M-8.8 7.2 Q-2 4 2.2 -2 L5 -1.6 L5.2 7.4 Q-2 8 -8.8 7.2Z" fill="#2a9fe0"/>
<path d="M-8.8 7.2 Q-3 5.4 0.5 1.5 L1 7.4Z" fill="#4fb8ee" opacity="0.7"/>
<rect x="4" y="-3.6" width="1.7" height="10.8" fill="#4a4038"/>
<path d="M4.6 7.2 H6.6" stroke="#333" stroke-width="1"/>
<path d="M1.6 -2.4 L3.6 -3.4 L4.4 -1.8" fill="#e8b890"/>
<circle cx="-1" cy="-4.6" r="1.7" fill="#b07840"/>
<circle cx="-0.4" cy="-3.2" r="1.2" fill="#e8b890"/>
<circle cx="2.5" cy="-6" r="1.6" fill="#a87848"/>
<circle cx="2.8" cy="-4.8" r="1.1" fill="#e0ac84"/>
<path d="M4.8 -3.2 L8 -4.8" stroke="#9a8a78" stroke-width="1.1"/></svg>
<div class="r" style="left:0px;top:588px;width:374px;height:20px;background:#d9f1ff;"></div>
<span class="t" style="left:122.50px;top:590.60px;font-size:13px;line-height:13px;color:#8c8c95;letter-spacing:0.420px;transform-origin:0 11.00px;transform:scaleY(1.1);">09:00</span>
<span class="t" style="left:172.40px;top:590.60px;font-size:13px;line-height:13px;color:#8c8c95;letter-spacing:0.400px;transform-origin:0 11.00px;transform:scaleY(1.1);">0/0</span>
<span class="t" style="left:221.50px;top:590.60px;font-size:13px;line-height:13px;color:#8c8c95;letter-spacing:0.144px;transform-origin:0 11.00px;transform:scaleY(1.1);">Krump deja</span>
<svg class="r" style="left:71px;top:586px;overflow:visible" width="24" height="24" viewBox="-12 -12 24 24"><path d="M-8.8 7.2 Q-2 4 2.2 -2 L5 -1.6 L5.2 7.4 Q-2 8 -8.8 7.2Z" fill="#2a9fe0"/>
<path d="M-8.8 7.2 Q-3 5.4 0.5 1.5 L1 7.4Z" fill="#4fb8ee" opacity="0.7"/>
<rect x="4" y="-3.6" width="1.7" height="10.8" fill="#4a4038"/>
<path d="M4.6 7.2 H6.6" stroke="#333" stroke-width="1"/>
<path d="M1.6 -2.4 L3.6 -3.4 L4.4 -1.8" fill="#e8b890"/>
<circle cx="-1" cy="-4.6" r="1.7" fill="#b07840"/>
<circle cx="-0.4" cy="-3.2" r="1.2" fill="#e8b890"/>
<circle cx="2.5" cy="-6" r="1.6" fill="#a87848"/>
<circle cx="2.8" cy="-4.8" r="1.1" fill="#e0ac84"/>
<path d="M4.8 -3.2 L8 -4.8" stroke="#9a8a78" stroke-width="1.1"/></svg>
<div class="r" style="left:0px;top:608px;width:374px;height:20px;background:#ddfae2;"></div>
<span class="t" style="left:122.50px;top:610.60px;font-size:13px;line-height:13px;color:#8c8c95;letter-spacing:0.420px;transform-origin:0 11.00px;transform:scaleY(1.1);">10:00</span>
<span class="t" style="left:172.40px;top:610.60px;font-size:13px;line-height:13px;color:#8c8c95;letter-spacing:0.400px;transform-origin:0 11.00px;transform:scaleY(1.1);">0/0</span>
<span class="t" style="left:221.50px;top:610.60px;font-size:13px;line-height:13px;color:#8c8c95;letter-spacing:0.144px;transform-origin:0 11.00px;transform:scaleY(1.1);">Krump deja</span>
<svg class="r" style="left:71px;top:606px;overflow:visible" width="24" height="24" viewBox="-12 -12 24 24"><path d="M-8.8 7.2 Q-2 4 2.2 -2 L5 -1.6 L5.2 7.4 Q-2 8 -8.8 7.2Z" fill="#2a9fe0"/>
<path d="M-8.8 7.2 Q-3 5.4 0.5 1.5 L1 7.4Z" fill="#4fb8ee" opacity="0.7"/>
<rect x="4" y="-3.6" width="1.7" height="10.8" fill="#4a4038"/>
<path d="M4.6 7.2 H6.6" stroke="#333" stroke-width="1"/>
<path d="M1.6 -2.4 L3.6 -3.4 L4.4 -1.8" fill="#e8b890"/>
<circle cx="-1" cy="-4.6" r="1.7" fill="#b07840"/>
<circle cx="-0.4" cy="-3.2" r="1.2" fill="#e8b890"/>
<circle cx="2.5" cy="-6" r="1.6" fill="#a87848"/>
<circle cx="2.8" cy="-4.8" r="1.1" fill="#e0ac84"/>
<path d="M4.8 -3.2 L8 -4.8" stroke="#9a8a78" stroke-width="1.1"/></svg>
<div class="r" style="left:0px;top:628px;width:374px;height:20px;background:#d9f1ff;"></div>
<span class="t" style="left:122.50px;top:630.60px;font-size:13px;line-height:13px;color:#8c8c95;letter-spacing:0.420px;transform-origin:0 11.00px;transform:scaleY(1.1);">11:00</span>
<span class="t" style="left:172.40px;top:630.60px;font-size:13px;line-height:13px;color:#8c8c95;letter-spacing:0.400px;transform-origin:0 11.00px;transform:scaleY(1.1);">0/0</span>
<span class="t" style="left:221.50px;top:630.60px;font-size:13px;line-height:13px;color:#8c8c95;letter-spacing:0.144px;transform-origin:0 11.00px;transform:scaleY(1.1);">Krump deja</span>
<svg class="r" style="left:71px;top:626px;overflow:visible" width="24" height="24" viewBox="-12 -12 24 24"><path d="M-8.8 7.2 Q-2 4 2.2 -2 L5 -1.6 L5.2 7.4 Q-2 8 -8.8 7.2Z" fill="#2a9fe0"/>
<path d="M-8.8 7.2 Q-3 5.4 0.5 1.5 L1 7.4Z" fill="#4fb8ee" opacity="0.7"/>
<rect x="4" y="-3.6" width="1.7" height="10.8" fill="#4a4038"/>
<path d="M4.6 7.2 H6.6" stroke="#333" stroke-width="1"/>
<path d="M1.6 -2.4 L3.6 -3.4 L4.4 -1.8" fill="#e8b890"/>
<circle cx="-1" cy="-4.6" r="1.7" fill="#b07840"/>
<circle cx="-0.4" cy="-3.2" r="1.2" fill="#e8b890"/>
<circle cx="2.5" cy="-6" r="1.6" fill="#a87848"/>
<circle cx="2.8" cy="-4.8" r="1.1" fill="#e0ac84"/>
<path d="M4.8 -3.2 L8 -4.8" stroke="#9a8a78" stroke-width="1.1"/></svg>
</div>
<div class="r" style="left:774px;top:167px;width:1px;height:696.5px;background:#bebebe;"></div>
<div class="r" style="left:401px;top:862.8px;width:374px;height:1px;background:#bebebe;"></div>
<svg class="r" style="left:781.7px;top:175px;" width="7" height="3.6" viewBox="0 0 7 3.6"><path d="M0 3.6 L3.5 0 L7 3.6Z" fill="#9a9a9a"/></svg>
<div class="r" style="left:780.3px;top:188px;width:9.8px;height:384.4px;background:#b9b9b9;"></div>
<svg class="r" style="left:781.7px;top:850.5px;" width="7" height="3.6" viewBox="0 0 7 3.6"><path d="M0 0 H7 L3.5 3.6Z" fill="#8a8a8a"/></svg>
<svg class="r" style="left:409.2px;top:870.8px;" width="3.8" height="6.8" viewBox="0 0 3.8 6.8"><path d="M3.8 0 V6.8 L0 3.4Z" fill="#8a8a8a"/></svg>
<div class="r" style="left:421.3px;top:869.4px;width:301.4px;height:9.5px;background:#b9b9b9;"></div>
<svg class="r" style="left:761.4px;top:870.8px;" width="3.8" height="6.8" viewBox="0 0 3.8 6.8"><path d="M0 0 V6.8 L3.8 3.4Z" fill="#8a8a8a"/></svg>
<div class="r" style="left:804px;top:165px;width:398px;height:721px;background:#fff;border:2px solid #c8c8c8;box-sizing:border-box;"></div>
<div class="r" style="left:806px;top:167px;width:373px;height:66px;background:#f7f7f7;"></div>
<div class="r" style="left:806px;top:199px;width:373px;height:1px;background:#c4c4c4;"></div>
<div class="r" style="left:806px;top:233px;width:373px;height:1px;background:#c4c4c4;"></div>
<div class="r" style="left:928px;top:200px;width:1px;height:33px;background:#c4c4c4;"></div>
<div class="r" style="left:977.8px;top:200px;width:1px;height:33px;background:#c4c4c4;"></div>
<div class="r" style="left:1028px;top:200px;width:1px;height:33px;background:#c4c4c4;"></div>
<span class="t" style="left:972.80px;top:178.20px;font-size:13px;line-height:13px;color:#222;letter-spacing:0.082px;transform-origin:0 11.00px;transform:scaleY(1.1);">2. Mazā zāle</span>
<span class="t" style="left:829.50px;top:211.60px;font-size:13px;line-height:13px;color:#222;letter-spacing:0.320px;transform-origin:0 11.00px;transform:scaleY(1.1);">Datums</span>
<svg class="r" style="left:907px;top:215.6px;" width="10.8" height="5.8" viewBox="0 0 10.8 5.8"><path d="M0 5.8 L5.4 0 L10.8 5.8Z" fill="#555"/></svg>
<span class="t" style="left:936.90px;top:211.60px;font-size:13px;line-height:13px;color:#222;letter-spacing:-0.025px;transform-origin:0 11.00px;transform:scaleY(1.1);">Laiks</span>
<span class="t" style="left:984.00px;top:211.60px;font-size:13px;line-height:13px;color:#222;letter-spacing:0.033px;transform-origin:0 11.00px;transform:scaleY(1.1);">Cilvēki</span>
<span class="t" style="left:1096.40px;top:211.60px;font-size:13px;line-height:13px;color:#222;letter-spacing:0.614px;transform-origin:0 11.00px;transform:scaleY(1.1);">Ieraksts</span>
<div class="c" style="left:806px;top:233.5px;width:373px;height:629.5px;">
<div class="r" style="left:0px;top:0px;width:374px;height:34px;background:#d9f1ff;"></div>
<div class="r" style="left:33px;top:0px;width:341px;height:34px;background:#0080c6;"></div>
<svg class="r" style="left:6.6px;top:7.8px;" width="19" height="19" viewBox="0 0 19 19"><circle cx="9.5" cy="9.5" r="7.35" fill="none" stroke="#3c3c3c" stroke-width="1.3"/><path d="M6.3 6.3 L12.5 12.5 M7.3 12.7 L12.7 12.7 L12.7 7.3" fill="none" stroke="#3c3c3c" stroke-width="1.5"/></svg>
<span class="t" style="left:33.50px;top:3.30px;font-size:13px;line-height:13px;color:#00e6ff;letter-spacing:0.522px;transform-origin:0 11.00px;transform:scaleY(1.1);">22.08.2024</span>
<span class="t" style="left:222.10px;top:3.30px;font-size:13px;line-height:13px;color:#00e6ff;letter-spacing:0.400px;transform-origin:0 11.00px;transform:scaleY(1.1);">Ceturtdiena</span>
<div class="r" style="left:0px;top:34px;width:374px;height:60px;background:#ddfae2;"></div>
<span class="t" style="left:122.50px;top:36.60px;font-size:13px;line-height:13px;color:#8c8c95;letter-spacing:0.420px;transform-origin:0 11.00px;transform:scaleY(1.1);">07:00</span>
<span class="t" style="left:172.40px;top:36.60px;font-size:13px;line-height:13px;color:#8c8c95;letter-spacing:0.400px;transform-origin:0 11.00px;transform:scaleY(1.1);">0/0</span>
<span class="t" style="left:221.80px;top:36.60px;font-size:13px;line-height:13px;color:#8c8c95;letter-spacing:0.209px;transform-origin:0 11.00px;transform:scaleY(1.1);">Bārbiju deja</span>
<span class="t" style="left:223.20px;top:52.60px;font-size:13px;line-height:13px;color:#8c8c95;letter-spacing:0.117px;transform-origin:0 11.00px;transform:scaleY(1.1);">1. darbinieks</span>
<span class="t" style="left:222.20px;top:68.60px;font-size:13px;line-height:13px;color:#8c8c95;letter-spacing:0.179px;transform-origin:0 11.00px;transform:scaleY(1.1);">Grupa: Children</span>
<svg class="r" style="left:70.4px;top:52px;overflow:visible" width="24" height="24" viewBox="-12 -12 24 24"><rect x="-0.6" y="6" width="1.2" height="3.2" fill="#e8c0a0"/>
<ellipse cx="0" cy="3.4" rx="2.3" ry="3.7" fill="#f8505a"/>
<rect x="-0.8" y="-2" width="1.6" height="2.4" fill="#e8b088"/>
<circle cx="0" cy="-6" r="2.1" fill="#5a3a28"/>
<circle cx="0" cy="-3.8" r="1.7" fill="#f04848"/></svg>
<div class="r" style="left:0px;top:94px;width:374px;height:60px;background:#d9f1ff;"></div>
<span class="t" style="left:122.50px;top:96.60px;font-size:13px;line-height:13px;color:#8c8c95;letter-spacing:0.420px;transform-origin:0 11.00px;transform:scaleY(1.1);">08:00</span>
<span class="t" style="left:172.40px;top:96.60px;font-size:13px;line-height:13px;color:#8c8c95;letter-spacing:0.400px;transform-origin:0 11.00px;transform:scaleY(1.1);">0/0</span>
<span class="t" style="left:221.80px;top:96.60px;font-size:13px;line-height:13px;color:#8c8c95;letter-spacing:0.209px;transform-origin:0 11.00px;transform:scaleY(1.1);">Bārbiju deja</span>
<span class="t" style="left:223.20px;top:112.60px;font-size:13px;line-height:13px;color:#8c8c95;letter-spacing:0.117px;transform-origin:0 11.00px;transform:scaleY(1.1);">1. darbinieks</span>
<span class="t" style="left:222.20px;top:128.60px;font-size:13px;line-height:13px;color:#8c8c95;letter-spacing:0.179px;transform-origin:0 11.00px;transform:scaleY(1.1);">Grupa: Children</span>
<svg class="r" style="left:70.4px;top:112px;overflow:visible" width="24" height="24" viewBox="-12 -12 24 24"><rect x="-0.6" y="6" width="1.2" height="3.2" fill="#e8c0a0"/>
<ellipse cx="0" cy="3.4" rx="2.3" ry="3.7" fill="#f8505a"/>
<rect x="-0.8" y="-2" width="1.6" height="2.4" fill="#e8b088"/>
<circle cx="0" cy="-6" r="2.1" fill="#5a3a28"/>
<circle cx="0" cy="-3.8" r="1.7" fill="#f04848"/></svg>
<div class="r" style="left:0px;top:154px;width:374px;height:60px;background:#ddfae2;"></div>
<div class="r" style="left:122.6px;top:154px;width:252px;height:60px;background:#ffffb4;"></div>
<span class="t" style="left:122.50px;top:156.60px;font-size:13px;line-height:13px;color:#000;letter-spacing:0.420px;transform-origin:0 11.00px;transform:scaleY(1.1);">09:00</span>
<span class="t" style="left:172.40px;top:156.60px;font-size:13px;line-height:13px;color:#000;letter-spacing:0.400px;transform-origin:0 11.00px;transform:scaleY(1.1);">0/1</span>
<span class="t" style="left:221.80px;top:156.60px;font-size:13px;line-height:13px;color:#000;letter-spacing:0.209px;transform-origin:0 11.00px;transform:scaleY(1.1);">Bārbiju deja</span>
<span class="t" style="left:223.20px;top:172.60px;font-size:13px;line-height:13px;color:#000;letter-spacing:0.117px;transform-origin:0 11.00px;transform:scaleY(1.1);">1. darbinieks</span>
<span class="t" style="left:222.20px;top:188.60px;font-size:13px;line-height:13px;color:#000;letter-spacing:0.179px;transform-origin:0 11.00px;transform:scaleY(1.1);">Grupa: Children</span>
<svg class="r" style="left:70.4px;top:172px;overflow:visible" width="24" height="24" viewBox="-12 -12 24 24"><rect x="-0.6" y="6" width="1.2" height="3.2" fill="#e8c0a0"/>
<ellipse cx="0" cy="3.4" rx="2.3" ry="3.7" fill="#f8505a"/>
<rect x="-0.8" y="-2" width="1.6" height="2.4" fill="#e8b088"/>
<circle cx="0" cy="-6" r="2.1" fill="#5a3a28"/>
<circle cx="0" cy="-3.8" r="1.7" fill="#f04848"/></svg>
<div class="r" style="left:0px;top:214px;width:374px;height:20px;background:#d9f1ff;"></div>
<div class="r" style="left:122.6px;top:214px;width:252px;height:20px;background:#ffffb4;"></div>
<span class="t" style="left:122.50px;top:216.60px;font-size:13px;line-height:13px;color:#000;letter-spacing:0.420px;transform-origin:0 11.00px;transform:scaleY(1.1);">10:00</span>
<span class="t" style="left:172.40px;top:216.60px;font-size:13px;line-height:13px;color:#000;letter-spacing:0.400px;transform-origin:0 11.00px;transform:scaleY(1.1);">0/1</span>
<span class="t" style="left:221.80px;top:216.60px;font-size:13px;line-height:13px;color:#000;letter-spacing:0.057px;transform-origin:0 11.00px;transform:scaleY(1.1);">Laikmetīgā deja</span>
<svg class="r" style="left:70.6px;top:212px;overflow:visible" width="24" height="24" viewBox="-12 -12 24 24"><path d="M-0.2 6.6 L-6.6 6.8" stroke="#5a4a40" stroke-width="1.1"/>
<path d="M-4 6 L0 3" stroke="#e8b8a0" stroke-width="1.6"/>
<rect x="3.4" y="-5.6" width="2.6" height="8" rx="1" fill="#2c2422"/>
<path d="M4.6 2 L5.6 7" stroke="#3a3a3a" stroke-width="1.5"/>
<path d="M4.6 7.2 H6.8" stroke="#222" stroke-width="1"/>
<path d="M0.4 -2.4 Q-0.6 3 -0.2 7 L4.4 7.2 L4 -2Z" fill="#e8201c"/>
<path d="M-0.6 -5.6 L3 -5.6 L3.6 -1.8 L0.2 -1.8Z" fill="#f0c0a8"/>
<circle cx="-1" cy="-5.4" r="1.7" fill="#a06038"/>
<circle cx="2.6" cy="-7.2" r="1.5" fill="#383038"/>
<path d="M5 -5 L6 -8" stroke="#d8c0b0" stroke-width="1.2"/></svg>
<div class="r" style="left:0px;top:234px;width:374px;height:20px;background:#ddfae2;"></div>
<span class="t" style="left:122.50px;top:236.60px;font-size:13px;line-height:13px;color:#8c8c95;letter-spacing:0.420px;transform-origin:0 11.00px;transform:scaleY(1.1);">11:00</span>
<span class="t" style="left:172.40px;top:236.60px;font-size:13px;line-height:13px;color:#8c8c95;letter-spacing:0.400px;transform-origin:0 11.00px;transform:scaleY(1.1);">0/0</span>
<span class="t" style="left:221.80px;top:236.60px;font-size:13px;line-height:13px;color:#8c8c95;letter-spacing:0.057px;transform-origin:0 11.00px;transform:scaleY(1.1);">Laikmetīgā deja</span>
<svg class="r" style="left:70.6px;top:232px;overflow:visible" width="24" height="24" viewBox="-12 -12 24 24"><path d="M-0.2 6.6 L-6.6 6.8" stroke="#5a4a40" stroke-width="1.1"/>
<path d="M-4 6 L0 3" stroke="#e8b8a0" stroke-width="1.6"/>
<rect x="3.4" y="-5.6" width="2.6" height="8" rx="1" fill="#2c2422"/>
<path d="M4.6 2 L5.6 7" stroke="#3a3a3a" stroke-width="1.5"/>
<path d="M4.6 7.2 H6.8" stroke="#222" stroke-width="1"/>
<path d="M0.4 -2.4 Q-0.6 3 -0.2 7 L4.4 7.2 L4 -2Z" fill="#e8201c"/>
<path d="M-0.6 -5.6 L3 -5.6 L3.6 -1.8 L0.2 -1.8Z" fill="#f0c0a8"/>
<circle cx="-1" cy="-5.4" r="1.7" fill="#a06038"/>
<circle cx="2.6" cy="-7.2" r="1.5" fill="#383038"/>
<path d="M5 -5 L6 -8" stroke="#d8c0b0" stroke-width="1.2"/></svg>
<div class="r" style="left:0px;top:254px;width:374px;height:20px;background:#d9f1ff;"></div>
<span class="t" style="left:122.50px;top:256.60px;font-size:13px;line-height:13px;color:#8c8c95;letter-spacing:0.420px;transform-origin:0 11.00px;transform:scaleY(1.1);">12:00</span>
<span class="t" style="left:172.40px;top:256.60px;font-size:13px;line-height:13px;color:#8c8c95;letter-spacing:0.400px;transform-origin:0 11.00px;transform:scaleY(1.1);">0/0</span>
<span class="t" style="left:221.80px;top:256.60px;font-size:13px;line-height:13px;color:#8c8c95;letter-spacing:0.057px;transform-origin:0 11.00px;transform:scaleY(1.1);">Laikmetīgā deja</span>
<svg class="r" style="left:70.6px;top:252px;overflow:visible" width="24" height="24" viewBox="-12 -12 24 24"><path d="M-0.2 6.6 L-6.6 6.8" stroke="#5a4a40" stroke-width="1.1"/>
<path d="M-4 6 L0 3" stroke="#e8b8a0" stroke-width="1.6"/>
<rect x="3.4" y="-5.6" width="2.6" height="8" rx="1" fill="#2c2422"/>
<path d="M4.6 2 L5.6 7" stroke="#3a3a3a" stroke-width="1.5"/>
<path d="M4.6 7.2 H6.8" stroke="#222" stroke-width="1"/>
<path d="M0.4 -2.4 Q-0.6 3 -0.2 7 L4.4 7.2 L4 -2Z" fill="#e8201c"/>
<path d="M-0.6 -5.6 L3 -5.6 L3.6 -1.8 L0.2 -1.8Z" fill="#f0c0a8"/>
<circle cx="-1" cy="-5.4" r="1.7" fill="#a06038"/>
<circle cx="2.6" cy="-7.2" r="1.5" fill="#383038"/>
<path d="M5 -5 L6 -8" stroke="#d8c0b0" stroke-width="1.2"/></svg>
<div class="r" style="left:0px;top:274px;width:374px;height:20px;background:#ddfae2;"></div>
<span class="t" style="left:122.50px;top:276.60px;font-size:13px;line-height:13px;color:#8c8c95;letter-spacing:0.420px;transform-origin:0 11.00px;transform:scaleY(1.1);">13:00</span>
<span class="t" style="left:172.40px;top:276.60px;font-size:13px;line-height:13px;color:#8c8c95;letter-spacing:0.400px;transform-origin:0 11.00px;transform:scaleY(1.1);">0/0</span>
<span class="t" style="left:221.80px;top:276.60px;font-size:13px;line-height:13px;color:#8c8c95;letter-spacing:0.057px;transform-origin:0 11.00px;transform:scaleY(1.1);">Laikmetīgā deja</span>
<svg class="r" style="left:70.6px;top:272px;overflow:visible" width="24" height="24" viewBox="-12 -12 24 24"><path d="M-0.2 6.6 L-6.6 6.8" stroke="#5a4a40" stroke-width="1.1"/>
<path d="M-4 6 L0 3" stroke="#e8b8a0" stroke-width="1.6"/>
<rect x="3.4" y="-5.6" width="2.6" height="8" rx="1" fill="#2c2422"/>
<path d="M4.6 2 L5.6 7" stroke="#3a3a3a" stroke-width="1.5"/>
<path d="M4.6 7.2 H6.8" stroke="#222" stroke-width="1"/>
<path d="M0.4 -2.4 Q-0.6 3 -0.2 7 L4.4 7.2 L4 -2Z" fill="#e8201c"/>
<path d="M-0.6 -5.6 L3 -5.6 L3.6 -1.8 L0.2 -1.8Z" fill="#f0c0a8"/>
<circle cx="-1" cy="-5.4" r="1.7" fill="#a06038"/>
<circle cx="2.6" cy="-7.2" r="1.5" fill="#383038"/>
<path d="M5 -5 L6 -8" stroke="#d8c0b0" stroke-width="1.2"/></svg>
<div class="r" style="left:0px;top:294px;width:374px;height:20px;background:#d9f1ff;"></div>
<span class="t" style="left:122.50px;top:296.60px;font-size:13px;line-height:13px;color:#8c8c95;letter-spacing:0.420px;transform-origin:0 11.00px;transform:scaleY(1.1);">14:00</span>
<span class="t" style="left:172.40px;top:296.60px;font-size:13px;line-height:13px;color:#8c8c95;letter-spacing:0.400px;transform-origin:0 11.00px;transform:scaleY(1.1);">0/0</span>
<span class="t" style="left:221.80px;top:296.60px;font-size:13px;line-height:13px;color:#8c8c95;letter-spacing:0.057px;transform-origin:0 11.00px;transform:scaleY(1.1);">Laikmetīgā deja</span>
<svg class="r" style="left:70.6px;top:292px;overflow:visible" width="24" height="24" viewBox="-12 -12 24 24"><path d="M-0.2 6.6 L-6.6 6.8" stroke="#5a4a40" stroke-width="1.1"/>
<path d="M-4 6 L0 3" stroke="#e8b8a0" stroke-width="1.6"/>
<rect x="3.4" y="-5.6" width="2.6" height="8" rx="1" fill="#2c2422"/>
<path d="M4.6 2 L5.6 7" stroke="#3a3a3a" stroke-width="1.5"/>
<path d="M4.6 7.2 H6.8" stroke="#222" stroke-width="1"/>
<path d="M0.4 -2.4 Q-0.6 3 -0.2 7 L4.4 7.2 L4 -2Z" fill="#e8201c"/>
<path d="M-0.6 -5.6 L3 -5.6 L3.6 -1.8 L0.2 -1.8Z" fill="#f0c0a8"/>
<circle cx="-1" cy="-5.4" r="1.7" fill="#a06038"/>
<circle cx="2.6" cy="-7.2" r="1.5" fill="#383038"/>
<path d="M5 -5 L6 -8" stroke="#d8c0b0" stroke-width="1.2"/></svg>
<div class="r" style="left:0px;top:314px;width:374px;height:40px;background:#ddfae2;"></div>
<span class="t" style="left:122.50px;top:316.60px;font-size:13px;line-height:13px;color:#8c8c95;letter-spacing:0.420px;transform-origin:0 11.00px;transform:scaleY(1.1);">15:00</span>
<span class="t" style="left:172.40px;top:316.60px;font-size:13px;line-height:13px;color:#8c8c95;letter-spacing:0.400px;transform-origin:0 11.00px;transform:scaleY(1.1);">0/0</span>
<span class="t" style="left:221.80px;top:316.60px;font-size:13px;line-height:13px;color:#8c8c95;letter-spacing:0.145px;transform-origin:0 11.00px;transform:scaleY(1.1);">Popinga deja</span>
<span class="t" style="left:222.60px;top:332.60px;font-size:13px;line-height:13px;color:#8c8c95;letter-spacing:0.167px;transform-origin:0 11.00px;transform:scaleY(1.1);">5. darbinieks</span>
<svg class="r" style="left:70.5px;top:322px;overflow:visible" width="24" height="24" viewBox="-12 -12 24 24"><path d="M-1.6 1.4 Q-1 5 -2.4 8.6" stroke="#888" stroke-width="2" fill="none"/>
<path d="M-2.8 8.6 H-0.6" stroke="#555" stroke-width="1.2"/>
<path d="M-4.8 -4.4 L-1.4 -3.6 L-0.4 1.6 L-3.8 1.8Z" fill="#8a5a60"/>
<path d="M-3.4 -1 L-0.6 1.6 L-3.8 1.8Z" fill="#707080"/>
<circle cx="-4.3" cy="-6.2" r="1.6" fill="#4a3430"/>
<circle cx="-5.4" cy="3.6" r="1.1" fill="#58b070"/>
<path d="M0.4 0.8 Q1.6 -3 2.6 -4.4 L4 -4.2 Q6 -1.4 7.6 0.2 Q4 1.8 0.4 0.8Z" fill="#22a458"/>
<circle cx="2" cy="-5.8" r="1.5" fill="#e8b860"/>
<path d="M0.6 -7 Q2 -8.4 3.4 -7" stroke="#2aa060" stroke-width="1.1" fill="none"/>
<path d="M-0.6 -2.4 L1.4 -3" stroke="#f0c060" stroke-width="1"/></svg>
<div class="r" style="left:0px;top:354px;width:374px;height:40px;background:#d9f1ff;"></div>
<span class="t" style="left:122.50px;top:356.60px;font-size:13px;line-height:13px;color:#8c8c95;letter-spacing:0.420px;transform-origin:0 11.00px;transform:scaleY(1.1);">16:00</span>
<span class="t" style="left:172.40px;top:356.60px;font-size:13px;line-height:13px;color:#8c8c95;letter-spacing:0.400px;transform-origin:0 11.00px;transform:scaleY(1.1);">0/0</span>
<span class="t" style="left:221.80px;top:356.60px;font-size:13px;line-height:13px;color:#8c8c95;letter-spacing:0.145px;transform-origin:0 11.00px;transform:scaleY(1.1);">Popinga deja</span>
<span class="t" style="left:222.60px;top:372.60px;font-size:13px;line-height:13px;color:#8c8c95;letter-spacing:0.167px;transform-origin:0 11.00px;transform:scaleY(1.1);">5. darbinieks</span>
<svg class="r" style="left:70.5px;top:362px;overflow:visible" width="24" height="24" viewBox="-12 -12 24 24"><path d="M-1.6 1.4 Q-1 5 -2.4 8.6" stroke="#888" stroke-width="2" fill="none"/>
<path d="M-2.8 8.6 H-0.6" stroke="#555" stroke-width="1.2"/>
<path d="M-4.8 -4.4 L-1.4 -3.6 L-0.4 1.6 L-3.8 1.8Z" fill="#8a5a60"/>
<path d="M-3.4 -1 L-0.6 1.6 L-3.8 1.8Z" fill="#707080"/>
<circle cx="-4.3" cy="-6.2" r="1.6" fill="#4a3430"/>
<circle cx="-5.4" cy="3.6" r="1.1" fill="#58b070"/>
<path d="M0.4 0.8 Q1.6 -3 2.6 -4.4 L4 -4.2 Q6 -1.4 7.6 0.2 Q4 1.8 0.4 0.8Z" fill="#22a458"/>
<circle cx="2" cy="-5.8" r="1.5" fill="#e8b860"/>
<path d="M0.6 -7 Q2 -8.4 3.4 -7" stroke="#2aa060" stroke-width="1.1" fill="none"/>
<path d="M-0.6 -2.4 L1.4 -3" stroke="#f0c060" stroke-width="1"/></svg>
<div class="r" style="left:0px;top:394px;width:374px;height:40px;background:#ddfae2;"></div>
<span class="t" style="left:122.50px;top:396.60px;font-size:13px;line-height:13px;color:#8c8c95;letter-spacing:0.420px;transform-origin:0 11.00px;transform:scaleY(1.1);">17:00</span>
<span class="t" style="left:172.40px;top:396.60px;font-size:13px;line-height:13px;color:#8c8c95;letter-spacing:0.400px;transform-origin:0 11.00px;transform:scaleY(1.1);">0/0</span>
<span class="t" style="left:221.80px;top:396.60px;font-size:13px;line-height:13px;color:#8c8c95;letter-spacing:0.145px;transform-origin:0 11.00px;transform:scaleY(1.1);">Popinga deja</span>
<span class="t" style="left:222.60px;top:412.60px;font-size:13px;line-height:13px;color:#8c8c95;letter-spacing:0.167px;transform-origin:0 11.00px;transform:scaleY(1.1);">5. darbinieks</span>
<svg class="r" style="left:70.5px;top:402px;overflow:visible" width="24" height="24" viewBox="-12 -12 24 24"><path d="M-1.6 1.4 Q-1 5 -2.4 8.6" stroke="#888" stroke-width="2" fill="none"/>
<path d="M-2.8 8.6 H-0.6" stroke="#555" stroke-width="1.2"/>
<path d="M-4.8 -4.4 L-1.4 -3.6 L-0.4 1.6 L-3.8 1.8Z" fill="#8a5a60"/>
<path d="M-3.4 -1 L-0.6 1.6 L-3.8 1.8Z" fill="#707080"/>
<circle cx="-4.3" cy="-6.2" r="1.6" fill="#4a3430"/>
<circle cx="-5.4" cy="3.6" r="1.1" fill="#58b070"/>
<path d="M0.4 0.8 Q1.6 -3 2.6 -4.4 L4 -4.2 Q6 -1.4 7.6 0.2 Q4 1.8 0.4 0.8Z" fill="#22a458"/>
<circle cx="2" cy="-5.8" r="1.5" fill="#e8b860"/>
<path d="M0.6 -7 Q2 -8.4 3.4 -7" stroke="#2aa060" stroke-width="1.1" fill="none"/>
<path d="M-0.6 -2.4 L1.4 -3" stroke="#f0c060" stroke-width="1"/></svg>
<div class="r" style="left:0px;top:434px;width:374px;height:20px;background:#d9f1ff;"></div>
<div class="r" style="left:122.6px;top:434px;width:252px;height:20px;background:#ffffb4;"></div>
<span class="t" style="left:122.50px;top:436.60px;font-size:13px;line-height:13px;color:#000;letter-spacing:0.420px;transform-origin:0 11.00px;transform:scaleY(1.1);">18:00</span>
<span class="t" style="left:172.40px;top:436.60px;font-size:13px;line-height:13px;color:#000;letter-spacing:0.400px;transform-origin:0 11.00px;transform:scaleY(1.1);">0/1</span>
<span class="t" style="left:221.80px;top:436.60px;font-size:13px;line-height:13px;color:#000;letter-spacing:0.208px;transform-origin:0 11.00px;transform:scaleY(1.1);">Hiphopa dejas</span>
<svg class="r" style="left:71px;top:432px;overflow:visible" width="24" height="24" viewBox="-12 -12 24 24"><path d="M-6.6 0.4 L-8 8" stroke="#24405c" stroke-width="2" stroke-linecap="round"/>
<path d="M-5.6 0.4 L-2.6 8" stroke="#3c5878" stroke-width="2" stroke-linecap="round"/>
<path d="M-9.8 -0.6 Q-9.4 -3.6 -7.6 -4.2 L-4.4 -4.6 L-2.2 -9.2 L-0.8 -8.6 L-3.2 -2.6 L-3.8 0.8 L-8.4 0.6 L-9 1.4Z" fill="#38a888"/>
<circle cx="-6.4" cy="-7" r="1.8" fill="#f8c8a0"/>
<path d="M3.4 0.4 L1.4 8" stroke="#4a607c" stroke-width="2" stroke-linecap="round"/>
<path d="M5 0.4 L6.6 8" stroke="#4a607c" stroke-width="2" stroke-linecap="round"/>
<path d="M0.6 -8.6 L2.8 -3.4 M8.6 -9 L6.2 -3.4" stroke="#e05040" stroke-width="1.8" stroke-linecap="round"/>
<rect x="2.2" y="-4" width="4.4" height="4.8" rx="0.8" fill="#e04020"/>
<circle cx="4" cy="-6.6" r="1.8" fill="#f8c8a8"/></svg>
<div class="r" style="left:0px;top:454px;width:374px;height:20px;background:#ddfae2;"></div>
<span class="t" style="left:122.50px;top:456.60px;font-size:13px;line-height:13px;color:#8c8c95;letter-spacing:0.420px;transform-origin:0 11.00px;transform:scaleY(1.1);">19:00</span>
<span class="t" style="left:172.40px;top:456.60px;font-size:13px;line-height:13px;color:#8c8c95;letter-spacing:0.400px;transform-origin:0 11.00px;transform:scaleY(1.1);">0/0</span>
<span class="t" style="left:221.80px;top:456.60px;font-size:13px;line-height:13px;color:#8c8c95;letter-spacing:0.208px;transform-origin:0 11.00px;transform:scaleY(1.1);">Hiphopa dejas</span>
<svg class="r" style="left:71px;top:452px;overflow:visible" width="24" height="24" viewBox="-12 -12 24 24"><path d="M-6.6 0.4 L-8 8" stroke="#24405c" stroke-width="2" stroke-linecap="round"/>
<path d="M-5.6 0.4 L-2.6 8" stroke="#3c5878" stroke-width="2" stroke-linecap="round"/>
<path d="M-9.8 -0.6 Q-9.4 -3.6 -7.6 -4.2 L-4.4 -4.6 L-2.2 -9.2 L-0.8 -8.6 L-3.2 -2.6 L-3.8 0.8 L-8.4 0.6 L-9 1.4Z" fill="#38a888"/>
<circle cx="-6.4" cy="-7" r="1.8" fill="#f8c8a0"/>
<path d="M3.4 0.4 L1.4 8" stroke="#4a607c" stroke-width="2" stroke-linecap="round"/>
<path d="M5 0.4 L6.6 8" stroke="#4a607c" stroke-width="2" stroke-linecap="round"/>
<path d="M0.6 -8.6 L2.8 -3.4 M8.6 -9 L6.2 -3.4" stroke="#e05040" stroke-width="1.8" stroke-linecap="round"/>
<rect x="2.2" y="-4" width="4.4" height="4.8" rx="0.8" fill="#e04020"/>
<circle cx="4" cy="-6.6" r="1.8" fill="#f8c8a8"/></svg>
<div class="r" style="left:0px;top:474px;width:374px;height:20px;background:#d9f1ff;"></div>
<span class="t" style="left:122.50px;top:476.60px;font-size:13px;line-height:13px;color:#8c8c95;letter-spacing:0.420px;transform-origin:0 11.00px;transform:scaleY(1.1);">20:00</span>
<span class="t" style="left:172.40px;top:476.60px;font-size:13px;line-height:13px;color:#8c8c95;letter-spacing:0.400px;transform-origin:0 11.00px;transform:scaleY(1.1);">0/0</span>
<span class="t" style="left:221.80px;top:476.60px;font-size:13px;line-height:13px;color:#8c8c95;letter-spacing:0.208px;transform-origin:0 11.00px;transform:scaleY(1.1);">Hiphopa dejas</span>
<svg class="r" style="left:71px;top:472px;overflow:visible" width="24" height="24" viewBox="-12 -12 24 24"><path d="M-6.6 0.4 L-8 8" stroke="#24405c" stroke-width="2" stroke-linecap="round"/>
<path d="M-5.6 0.4 L-2.6 8" stroke="#3c5878" stroke-width="2" stroke-linecap="round"/>
<path d="M-9.8 -0.6 Q-9.4 -3.6 -7.6 -4.2 L-4.4 -4.6 L-2.2 -9.2 L-0.8 -8.6 L-3.2 -2.6 L-3.8 0.8 L-8.4 0.6 L-9 1.4Z" fill="#38a888"/>
<circle cx="-6.4" cy="-7" r="1.8" fill="#f8c8a0"/>
<path d="M3.4 0.4 L1.4 8" stroke="#4a607c" stroke-width="2" stroke-linecap="round"/>
<path d="M5 0.4 L6.6 8" stroke="#4a607c" stroke-width="2" stroke-linecap="round"/>
<path d="M0.6 -8.6 L2.8 -3.4 M8.6 -9 L6.2 -3.4" stroke="#e05040" stroke-width="1.8" stroke-linecap="round"/>
<rect x="2.2" y="-4" width="4.4" height="4.8" rx="0.8" fill="#e04020"/>
<circle cx="4" cy="-6.6" r="1.8" fill="#f8c8a8"/></svg>
<div class="r" style="left:0px;top:494px;width:374px;height:34px;background:#ddfae2;"></div>
<div class="r" style="left:33px;top:494px;width:341px;height:34px;background:#0080c6;"></div>
<svg class="r" style="left:6.6px;top:501.8px;" width="19" height="19" viewBox="0 0 19 19"><circle cx="9.5" cy="9.5" r="7.35" fill="none" stroke="#3c3c3c" stroke-width="1.3"/><path d="M6.3 6.3 L12.5 12.5 M7.3 12.7 L12.7 12.7 L12.7 7.3" fill="none" stroke="#3c3c3c" stroke-width="1.5"/></svg>
<span class="t" style="left:33.50px;top:497.30px;font-size:13px;line-height:13px;color:#e4f4ff;letter-spacing:0.522px;transform-origin:0 11.00px;transform:scaleY(1.1);">23.08.2024</span>
<span class="t" style="left:221.60px;top:497.30px;font-size:13px;line-height:13px;color:#e4f4ff;letter-spacing:0.089px;transform-origin:0 11.00px;transform:scaleY(1.1);">Piektdiena</span>
<div class="r" style="left:0px;top:528px;width:374px;height:60px;background:#d9f1ff;"></div>
<span class="t" style="left:122.50px;top:530.60px;font-size:13px;line-height:13px;color:#8c8c95;letter-spacing:0.420px;transform-origin:0 11.00px;transform:scaleY(1.1);">07:00</span>
<span class="t" style="left:172.40px;top:530.60px;font-size:13px;line-height:13px;color:#8c8c95;letter-spacing:0.400px;transform-origin:0 11.00px;transform:scaleY(1.1);">0/0</span>
<span class="t" style="left:221.80px;top:530.60px;font-size:13px;line-height:13px;color:#8c8c95;letter-spacing:0.209px;transform-origin:0 11.00px;transform:scaleY(1.1);">Bārbiju deja</span>
<span class="t" style="left:223.20px;top:546.60px;font-size:13px;line-height:13px;color:#8c8c95;letter-spacing:0.117px;transform-origin:0 11.00px;transform:scaleY(1.1);">1. darbinieks</span>
<span class="t" style="left:222.20px;top:562.60px;font-size:13px;line-height:13px;color:#8c8c95;letter-spacing:0.179px;transform-origin:0 11.00px;transform:scaleY(1.1);">Grupa: Children</span>
<svg class="r" style="left:70.4px;top:546px;overflow:visible" width="24" height="24" viewBox="-12 -12 24 24"><rect x="-0.6" y="6" width="1.2" height="3.2" fill="#e8c0a0"/>
<ellipse cx="0" cy="3.4" rx="2.3" ry="3.7" fill="#f8505a"/>
<rect x="-0.8" y="-2" width="1.6" height="2.4" fill="#e8b088"/>
<circle cx="0" cy="-6" r="2.1" fill="#5a3a28"/>
<circle cx="0" cy="-3.8" r="1.7" fill="#f04848"/></svg>
<div class="r" style="left:0px;top:588px;width:374px;height:60px;background:#ddfae2;"></div>
<span class="t" style="left:122.50px;top:590.60px;font-size:13px;line-height:13px;color:#8c8c95;letter-spacing:0.420px;transform-origin:0 11.00px;transform:scaleY(1.1);">08:00</span>
<span class="t" style="left:172.40px;top:590.60px;font-size:13px;line-height:13px;color:#8c8c95;letter-spacing:0.400px;transform-origin:0 11.00px;transform:scaleY(1.1);">0/0</span>
<span class="t" style="left:221.80px;top:590.60px;font-size:13px;line-height:13px;color:#8c8c95;letter-spacing:0.209px;transform-origin:0 11.00px;transform:scaleY(1.1);">Bārbiju deja</span>
<span class="t" style="left:223.20px;top:606.60px;font-size:13px;line-height:13px;color:#8c8c95;letter-spacing:0.117px;transform-origin:0 11.00px;transform:scaleY(1.1);">1. darbinieks</span>
<span class="t" style="left:222.20px;top:622.60px;font-size:13px;line-height:13px;color:#8c8c95;letter-spacing:0.179px;transform-origin:0 11.00px;transform:scaleY(1.1);">Grupa: Children</span>
<svg class="r" style="left:70.4px;top:606px;overflow:visible" width="24" height="24" viewBox="-12 -12 24 24"><rect x="-0.6" y="6" width="1.2" height="3.2" fill="#e8c0a0"/>
<ellipse cx="0" cy="3.4" rx="2.3" ry="3.7" fill="#f8505a"/>
<rect x="-0.8" y="-2" width="1.6" height="2.4" fill="#e8b088"/>
<circle cx="0" cy="-6" r="2.1" fill="#5a3a28"/>
<circle cx="0" cy="-3.8" r="1.7" fill="#f04848"/></svg>
</div>
<div class="r" style="left:1179px;top:167px;width:1px;height:696.5px;background:#bebebe;"></div>
<div class="r" style="left:806px;top:862.8px;width:374px;height:1px;background:#bebebe;"></div>
<svg class="r" style="left:1186.7px;top:175px;" width="7" height="3.6" viewBox="0 0 7 3.6"><path d="M0 3.6 L3.5 0 L7 3.6Z" fill="#9a9a9a"/></svg>
<div class="r" style="left:1185.3px;top:188px;width:9.8px;height:415.6px;background:#b9b9b9;"></div>
<svg class="r" style="left:1186.7px;top:850.5px;" width="7" height="3.6" viewBox="0 0 7 3.6"><path d="M0 0 H7 L3.5 3.6Z" fill="#8a8a8a"/></svg>
<svg class="r" style="left:814.2px;top:870.8px;" width="3.8" height="6.8" viewBox="0 0 3.8 6.8"><path d="M3.8 0 V6.8 L0 3.4Z" fill="#8a8a8a"/></svg>
<div class="r" style="left:826.3px;top:869.4px;width:301.4px;height:9.5px;background:#b9b9b9;"></div>
<svg class="r" style="left:1166.4px;top:870.8px;" width="3.8" height="6.8" viewBox="0 0 3.8 6.8"><path d="M0 0 V6.8 L3.8 3.4Z" fill="#8a8a8a"/></svg>
<div class="r" style="left:22px;top:916px;width:182px;height:53px;background:#fff;border:1px solid #c6c6c6;border-bottom:none;box-sizing:border-box;"></div>
<div class="r" style="left:22px;top:969px;width:182px;height:3px;background:#00a2f4;"></div>
<svg class="r" style="left:40px;top:931.6px;" width="30" height="26.6" viewBox="0 0 30 26.6"><defs><linearGradient id="wg" x1="0" y1="0" x2="0" y2="1"><stop offset="0" stop-color="#f4f6fc"/><stop offset="1" stop-color="#dfe4f2"/></linearGradient>
<linearGradient id="wt" x1="0" y1="0" x2="0" y2="1"><stop offset="0" stop-color="#6aa4e6"/><stop offset="1" stop-color="#a8c8f0"/></linearGradient></defs>
<rect x="0.6" y="0.6" width="28.8" height="25.4" rx="2.4" fill="url(#wg)" stroke="#5f7cc0" stroke-width="1.2"/>
<path d="M1.2 6.4 V3 Q1.2 1.2 3 1.2 H27 Q28.8 1.2 28.8 3 V6.4Z" fill="url(#wt)"/>
<rect x="24" y="2.6" width="2.6" height="2.4" fill="#e84a4a"/></svg>
<span class="t" style="left:81.00px;top:937.70px;font-size:13px;line-height:13px;color:#1e9df0;letter-spacing:0.227px;transform-origin:0 11.00px;transform:scaleY(1.1);">Reģistrācija</span>
<svg class="r" style="left:170.6px;top:938.8px;" width="13" height="10.4" viewBox="0 0 13 10.4"><path d="M1.6 1.4 L11.2 9 M11.2 1.4 L1.6 9" stroke="#1e9df0" stroke-width="2" fill="none"/></svg>
<svg class="r" style="left:28.7px;top:974.6px;" width="19.6" height="19.6" viewBox="0 0 19.6 19.6"><circle cx="9.8" cy="9.8" r="9.8" fill="#3f7cbc"/><circle cx="9.8" cy="5.2" r="1.7" fill="#fff"/><rect x="8.3" y="8" width="3" height="7.6" rx="0.6" fill="#fff"/></svg>
<span class="t" style="left:70.30px;top:979.20px;font-size:13px;line-height:13px;color:#222;letter-spacing:0.432px;transform-origin:0 11.00px;transform:scaleY(1.1);">7.2.9059.10 Standard</span>
<div class="r" style="left:228.5px;top:976px;width:1px;height:17.5px;background:#c4c4c4;"></div>
<div class="r" style="left:398.8px;top:976px;width:1px;height:17.5px;background:#c4c4c4;"></div>
<div class="r" style="left:577.9px;top:976px;width:1px;height:17.5px;background:#c4c4c4;"></div>
<div class="r" style="left:726.5px;top:976px;width:1px;height:17.5px;background:#c4c4c4;"></div>
<div class="r" style="left:875.3px;top:976px;width:1px;height:17.5px;background:#c4c4c4;"></div>
<div class="r" style="left:1180.5px;top:976px;width:1px;height:17.5px;background:#c4c4c4;"></div>
<svg class="r" style="left:243.6px;top:974px;" width="15.8" height="19.2" viewBox="0 0 15.8 19.2"><defs><linearGradient id="dbg" x1="0" y1="0" x2="1" y2="0"><stop offset="0" stop-color="#e09a3c"/><stop offset="0.25" stop-color="#fff4d8"/><stop offset="0.6" stop-color="#f0b040"/><stop offset="1" stop-color="#d88a30"/></linearGradient></defs>
<rect x="0.4" y="0.6" width="15" height="18" rx="2.6" fill="url(#dbg)" stroke="#d08838" stroke-width="0.8"/>
<path d="M0.8 7.6 Q8 9.4 15 7.6 M0.8 12.8 Q8 14.6 15 12.8" stroke="#c87c2c" stroke-width="1" fill="none"/>
<ellipse cx="7.9" cy="2.2" rx="6.8" ry="1.5" fill="#f4c070" opacity="0.9"/></svg>
<span class="t" style="left:281.00px;top:979.20px;font-size:13px;line-height:13px;color:#222;letter-spacing:0.467px;transform-origin:0 11.00px;transform:scaleY(1.1);">localhost (utf8)</span>
<svg class="r" style="left:411.8px;top:975px;" width="18" height="18" viewBox="0 0 18 18"><defs><radialGradient id="uh3857" cx="0.4" cy="0.35" r="0.7"><stop offset="0" stop-color="#f6d2b0"/><stop offset="1" stop-color="#c98a58"/></radialGradient>
<linearGradient id="ub3857" x1="0" y1="0" x2="0" y2="1"><stop offset="0" stop-color="#9bd24a"/><stop offset="1" stop-color="#4f9a1e"/></linearGradient></defs>
<path d="M0.6 17 Q0.6 12.6 5.5 11.8 L9 13.4 L12.5 11.8 Q17.4 12.6 17.4 17 Q9 18.6 0.6 17Z" fill="url(#ub3857)" stroke="#4a8a1c" stroke-width="0.6"/>
<path d="M7 9 H11 V12.4 L9 13.6 L7 12.4Z" fill="#d9a273"/>
<ellipse cx="9" cy="6" rx="4.1" ry="5" fill="url(#uh3857)"/>
<path d="M4.6 6.2 Q3.8 0.6 9 0.4 Q14.4 0.6 13.4 6.4 Q12.6 3.4 9 3.2 Q5.6 3.4 4.6 6.2Z" fill="#a8501e"/></svg>
<span class="t" style="left:450.60px;top:979.20px;font-size:13px;line-height:13px;color:#222;letter-spacing:0.131px;transform-origin:0 11.00px;transform:scaleY(1.1);">NIKOLAY (MAIN)</span>
<svg class="r" style="left:591px;top:975px;" width="18.4" height="18" viewBox="0 0 18.4 18"><rect x="0.6" y="0.6" width="17.2" height="16.8" rx="1.2" fill="#fbfcff" stroke="#6f8fd2" stroke-width="1.2"/>
<path d="M0.4 5.6 V1.8 Q0.4 0.3 1.8 0.3 H16.6 Q18 0.3 18 1.8 V5.6Z" fill="#e8584a"/>
<path d="M1.4 2 H17" stroke="#f4a090" stroke-width="1"/>
<text x="9.2" y="15" font-family="Liberation Sans, sans-serif" font-weight="bold" font-size="10.5" fill="#3a4458" text-anchor="middle" textLength="12.4" lengthAdjust="spacingAndGlyphs">31</text></svg>
<span class="t" style="left:630.90px;top:979.20px;font-size:13px;line-height:13px;color:#222;letter-spacing:0.678px;transform-origin:0 11.00px;transform:scaleY(1.1);">22.08.2024</span>
<span class="t" style="left:762.00px;top:979.20px;font-size:13px;line-height:13px;color:#222;letter-spacing:0.636px;transform-origin:0 11.00px;transform:scaleY(1.1);">00:00:00:005</span>
<span class="t" style="left:886.80px;top:979.20px;font-size:13px;line-height:13px;color:#222;letter-spacing:0.267px;transform-origin:0 11.00px;transform:scaleY(1.1);">Krump deja</span>
<div class="r" style="left:1206.6px;top:981.2px;width:2.7px;height:2.7px;background:#808080;border-radius:1.2px;"></div>
<div class="r" style="left:1201.4px;top:986.3px;width:2.7px;height:2.7px;background:#808080;border-radius:1.2px;"></div>
<div class="r" style="left:1206.6px;top:986.3px;width:2.7px;height:2.7px;background:#808080;border-radius:1.2px;"></div>
<div class="r" style="left:1196.2px;top:991.4px;width:2.7px;height:2.7px;background:#808080;border-radius:1.2px;"></div>
<div class="r" style="left:1201.4px;top:991.4px;width:2.7px;height:2.7px;background:#808080;border-radius:1.2px;"></div>
<div class="r" style="left:1206.6px;top:991.4px;width:2.7px;height:2.7px;background:#808080;border-radius:1.2px;"></div>
</body></html>
